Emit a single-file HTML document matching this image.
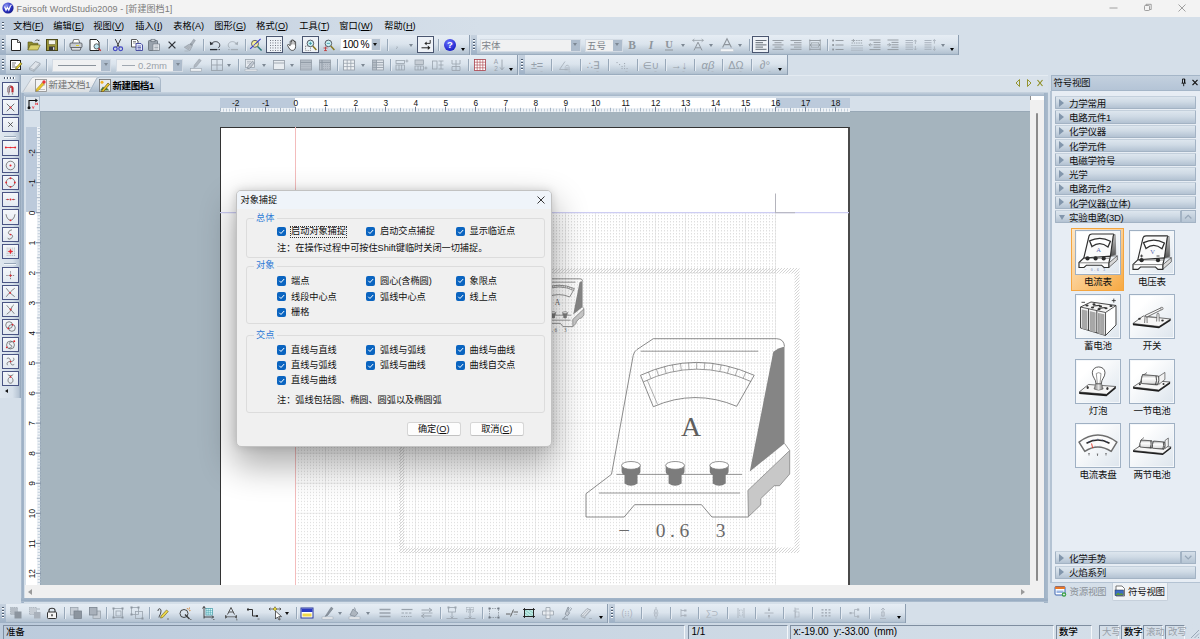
<!DOCTYPE html>
<html lang="zh"><head><meta charset="utf-8"><title>Fairsoft WordStudio2009</title>
<style>
*{box-sizing:border-box;margin:0;padding:0}
html,body{width:1200px;height:639px;overflow:hidden}
body{position:relative;background:#d5dfe9;font-family:"Liberation Sans","Noto Sans CJK SC",sans-serif;font-size:9px;color:#000;line-height:1}
.abs{position:absolute}
#title{position:absolute;left:0;top:0;width:1200px;height:17px;background:#f3f3f3}
#title .t{position:absolute;left:16.600px;top:4.600px;font-size:9px;color:#7b7b7b;white-space:nowrap;letter-spacing:0.070px}
#menu{position:absolute;left:0;top:17px;width:1200px;height:18px;background:linear-gradient(90deg,#bbcadb 0,#c2cfde 160px,#cfdae6 340px,#d5dfe9 480px)}
#menu span{position:absolute;top:4.800px;white-space:nowrap;font-size:9.200px;margin-left:-0.700px;letter-spacing:0.050px}
#menu u{text-decoration:underline;text-underline-offset:1px}
.tb{position:absolute;height:20px;background:linear-gradient(#e6edf4 0%,#dbe4ed 45%,#b4c3d2 92%,#8fa2b6 100%);border-right:1px solid #8c9db0}
.grip{position:absolute;left:2px;top:4px;width:2px;height:12px;background:repeating-linear-gradient(#4d5b6e 0 1px,#fff 1px 2px,transparent 2px 3px)}
.gz{position:absolute;left:0;top:0;width:5.500px;height:100%;background:linear-gradient(#c6d2df,#b3c2d3 50%,#9db0c5)}
.sep{position:absolute;top:4px;width:1px;height:12px;background:#98a8b9;box-shadow:1px 0 0 #e6ecf3}
.ic{position:absolute;overflow:visible}
.dd{position:absolute;width:0;height:0;border-left:2.5px solid transparent;border-right:2.5px solid transparent;border-top:3px solid #7d8894}
.ddk{position:absolute;width:0;height:0;border-left:2.5px solid transparent;border-right:2.5px solid transparent;border-top:3px solid #111}
.combo{position:absolute;top:3.600px;height:13px;background:#f0f1f2;border:1px solid #d3dbe4}
.combo .a{position:absolute;right:0;top:0;bottom:0;width:9px;background:#aebccc}
.boxed{position:absolute;top:1px;width:17px;height:17px;border:1px solid #4a5670;background:#eef2f7}
</style></head>
<body>
<div id="title">
<svg class="abs" style="left:1.700px;top:2.200px" width="12" height="12" viewBox="0 0 12 12"><defs><radialGradient id="lg" cx="35%" cy="30%" r="75%"><stop offset="0" stop-color="#8f97f0"/><stop offset="0.6" stop-color="#2b31c4"/><stop offset="1" stop-color="#151a86"/></radialGradient></defs><circle cx="6" cy="6" r="5.6" fill="url(#lg)"/><path d="M2.6 4.6 L4 8 L5.4 5.4 L6.8 8 L8.2 4.4" fill="none" stroke="#fff" stroke-width="1.2"/><path d="M8.4 3.2h1.8M8.4 3.2v2" stroke="#fff" stroke-width="0.8" fill="none"/></svg>
<div class="t">Fairsoft WordStudio2009 - [新建图档1]</div>
<svg class="abs" style="left:1105px;top:0" width="95" height="17" viewBox="0 0 95 17"><g stroke="#8a8a8a" stroke-width="0.8" fill="none"><path d="M4.5 8h8"/><rect x="39.5" y="5.5" width="5" height="5" rx="0.8"/><path d="M41 5.5v-1.2h5.2v5.2h-1.6"/><path d="M73.5 4.5l7 7M80.5 4.5l-7 7"/></g></svg>
</div>
<div id="menu"><div class="grip" style="left:2px;top:5px;height:9px"></div><span style="left:14px">文档(<u>F</u>)</span><span style="left:54px">编辑(<u>E</u>)</span><span style="left:94px">视图(<u>V</u>)</span><span style="left:136px">插入(<u>I</u>)</span><span style="left:174px">表格(A)</span><span style="left:215px">图形(<u>G</u>)</span><span style="left:257px">格式(<u>O</u>)</span><span style="left:300px">工具(<u>T</u>)</span><span style="left:340px">窗口(<u>W</u>)</span><span style="left:385px">帮助(<u>H</u>)</span></div>
<div class="tb" style="left:0px;top:35px;width:470px"><div class="gz"></div><div class="grip"></div><svg class="ic" style="left:8px;top:2px" width="16" height="16" viewBox="0 0 16 16" ><path d="M3.5 2.5h6l3 3v8h-9z" fill="#fff" stroke="#222" stroke-width="1"/><path d="M9.5 2.5v3h3" fill="#e8e8e8" stroke="#222" stroke-width="0.8"/></svg><svg class="ic" style="left:26px;top:2px" width="16" height="16" viewBox="0 0 16 16" ><path d="M2 5h4l1 1.2h5v2H4.2L2 13z" fill="#8e8a2a" stroke="#55521a" stroke-width="0.6"/><path d="M2 13l2.4-5h9.8l-2.4 5z" fill="#d8d06a" stroke="#6b671f" stroke-width="0.6"/><path d="M9 4.2c1-1.6 2.8-1.8 3.8-.6" fill="none" stroke="#444" stroke-width="0.8"/><path d="M13.4 2.4l-.2 1.8-1.6-.6z" fill="#444"/></svg><svg class="ic" style="left:44px;top:2px" width="16" height="16" viewBox="0 0 16 16" ><rect x="2.5" y="2.5" width="11" height="11" fill="#9c9738" stroke="#4a4718" stroke-width="1"/><rect x="4.5" y="3" width="7" height="4.5" fill="#f4f4ea" stroke="#5a5720" stroke-width="0.5"/><rect x="5" y="9.5" width="6" height="4" fill="#3a3a3a"/><rect x="9" y="10.2" width="1.4" height="2.6" fill="#ddd"/></svg><div class="sep" style="left:64px"></div><svg class="ic" style="left:68px;top:2px" width="16" height="16" viewBox="0 0 16 16" ><path d="M4.5 6l1.2-3.5h5l1 3.5" fill="#fff" stroke="#555" stroke-width="0.8"/><rect x="2" y="6" width="12" height="4.6" rx="1" fill="#c9cdd2" stroke="#4a4e55" stroke-width="0.8"/><path d="M3 10.6h10l-.8 2.6H3.8z" fill="#e9ebee" stroke="#4a4e55" stroke-width="0.8"/><rect x="8" y="8" width="3" height="1" fill="#e0d020"/></svg><svg class="ic" style="left:87px;top:2px" width="16" height="16" viewBox="0 0 16 16" ><path d="M3 2.5h6.5l2.5 2.5v8.5H3z" fill="#fff" stroke="#222" stroke-width="1"/><circle cx="9.6" cy="9.4" r="2.6" fill="#bfe6f2" stroke="#555" stroke-width="0.9"/><path d="M11.5 11.4l2.3 2.4" stroke="#c03030" stroke-width="1.3"/></svg><div class="sep" style="left:107px"></div><svg class="ic" style="left:110px;top:2px" width="16" height="16" viewBox="0 0 16 16" ><path d="M5.2 2l4 8M10.8 2l-4 8" stroke="#444" stroke-width="1" fill="none"/><circle cx="5.3" cy="11.8" r="1.9" fill="none" stroke="#3b3fc0" stroke-width="1.1"/><circle cx="10.7" cy="11.8" r="1.9" fill="none" stroke="#3b3fc0" stroke-width="1.1"/></svg><svg class="ic" style="left:129px;top:2px" width="16" height="16" viewBox="0 0 16 16" ><path d="M2.5 2.5h5l1.5 1.5v6h-6.5z" fill="#fff" stroke="#444" stroke-width="0.9"/><path d="M4 4.5h3M4 6h3" stroke="#666" stroke-width="0.7"/><path d="M7 6.5h5l1.5 1.5v5.5H7z" fill="#e8ecfa" stroke="#3a3f9a" stroke-width="0.9"/><path d="M8.5 9h3.5M8.5 10.5h3.5M8.5 12h3.5" stroke="#3a3f9a" stroke-width="0.7"/></svg><svg class="ic" style="left:146px;top:2px" width="16" height="16" viewBox="0 0 16 16" ><rect x="2.5" y="3.5" width="9" height="10" rx="0.8" fill="#9aa3ad" stroke="#6a737d" stroke-width="0.9"/><rect x="5" y="2.3" width="4" height="2.4" fill="#c8ced5" stroke="#6a737d" stroke-width="0.7"/><rect x="7" y="7" width="6.5" height="6.5" fill="#eef1f5" stroke="#7a838d" stroke-width="0.8"/><path d="M8.3 9h4M8.3 10.5h4M8.3 12h4" stroke="#8a939d" stroke-width="0.7"/></svg><svg class="ic" style="left:164px;top:2px" width="16" height="16" viewBox="0 0 16 16" ><path d="M4.6 4.6l6.8 6.8M11.4 4.6l-6.8 6.8" stroke="#30343a" stroke-width="1.3"/></svg><svg class="ic" style="left:182px;top:2px" width="16" height="16" viewBox="0 0 16 16" ><path d="M11.600 2.200l1.800 1.200-2.800 4.200-1.800-1.200z" fill="#a9b1ba" stroke="#8a939c" stroke-width="0.500"/><path d="M8.400 6l2.600 1.800-.800 1.400-2.800-1.800z" fill="#8d969f"/><path d="M7.200 7.200l3 2-2.400 4.600-5.600-3.600z" fill="#b9c0c8" stroke="#8a939c" stroke-width="0.500"/><path d="M3.600 10.600l3-2.600M4.800 11.400l3-2.600M6 12.200l2.800-2.400" stroke="#8a939c" stroke-width="0.500"/><path d="M2.500 14h4" stroke="#a0a8b1" stroke-width="0.600"/></svg><div class="sep" style="left:203px"></div><svg class="ic" style="left:207px;top:2px" width="16" height="16" viewBox="0 0 16 16" ><path d="M4.400 6.800c2-2.800 6.200-2.800 7.800-.400 1 1.600.600 3.400-.800 4.400" fill="none" stroke="#2a2e34" stroke-width="0.900"/><path d="M2.800 4.600l.400 3.600 3.400-1.200z" fill="#2a2e34"/><path d="M3 12.600h7" stroke="#2a2e34" stroke-width="1.300"/><path d="M10.600 12.600h2.400" stroke="#2a2e34" stroke-width="1" stroke-dasharray="0.800 0.600"/></svg><svg class="ic" style="left:225px;top:2px" width="16" height="16" viewBox="0 0 16 16" ><path d="M11.600 6.800c-2-2.800-6.200-2.800-7.800-.400-1 1.600-.600 3.400.800 4.400" fill="none" stroke="#a4adb6" stroke-width="0.900"/><path d="M13.200 4.600l-.400 3.600-3.400-1.200z" fill="#a4adb6"/><path d="M6 12.600h7" stroke="#a4adb6" stroke-width="1.300"/><path d="M3 12.600h2.400" stroke="#a4adb6" stroke-width="1" stroke-dasharray="0.800 0.600"/></svg><div class="sep" style="left:245px"></div><svg class="ic" style="left:248px;top:2px" width="16" height="16" viewBox="0 0 16 16" ><circle cx="7" cy="6.800" r="3.500" fill="#f4ee8a" stroke="#55555f" stroke-width="0.900"/><path d="M2.200 11.800L12.600 1.800" stroke="#3a3ac8" stroke-width="1.100"/><path d="M9.600 9.400l4 4.200" stroke="#2a7a7a" stroke-width="1.500"/><path d="M5 5.500l3.500 3M4.600 7.500l2.400 2" stroke="#fff" stroke-width="0.500"/></svg><div class="boxed" style="left:266px"></div><svg class="ic" style="left:266.5px;top:2px" width="16" height="16" viewBox="0 0 16 16" ><rect x="3" y="3" width="0.9" height="0.9" fill="#555b66"/><rect x="3" y="5.5" width="0.9" height="0.9" fill="#555b66"/><rect x="3" y="8" width="0.9" height="0.9" fill="#555b66"/><rect x="3" y="10.5" width="0.9" height="0.9" fill="#555b66"/><rect x="3" y="13" width="0.9" height="0.9" fill="#555b66"/><rect x="5.5" y="3" width="0.9" height="0.9" fill="#555b66"/><rect x="5.5" y="5.5" width="0.9" height="0.9" fill="#555b66"/><rect x="5.5" y="8" width="0.9" height="0.9" fill="#555b66"/><rect x="5.5" y="10.5" width="0.9" height="0.9" fill="#555b66"/><rect x="5.5" y="13" width="0.9" height="0.9" fill="#555b66"/><rect x="8" y="3" width="0.9" height="0.9" fill="#555b66"/><rect x="8" y="5.5" width="0.9" height="0.9" fill="#555b66"/><rect x="8" y="8" width="0.9" height="0.9" fill="#555b66"/><rect x="8" y="10.5" width="0.9" height="0.9" fill="#555b66"/><rect x="8" y="13" width="0.9" height="0.9" fill="#555b66"/><rect x="10.5" y="3" width="0.9" height="0.9" fill="#555b66"/><rect x="10.5" y="5.5" width="0.9" height="0.9" fill="#555b66"/><rect x="10.5" y="8" width="0.9" height="0.9" fill="#555b66"/><rect x="10.5" y="10.5" width="0.9" height="0.9" fill="#555b66"/><rect x="10.5" y="13" width="0.9" height="0.9" fill="#555b66"/><rect x="13" y="3" width="0.9" height="0.9" fill="#555b66"/><rect x="13" y="5.5" width="0.9" height="0.9" fill="#555b66"/><rect x="13" y="8" width="0.9" height="0.9" fill="#555b66"/><rect x="13" y="10.5" width="0.9" height="0.9" fill="#555b66"/><rect x="13" y="13" width="0.9" height="0.9" fill="#555b66"/></svg><svg class="ic" style="left:284.5px;top:2px" width="16" height="16" viewBox="0 0 16 16" ><path d="M5.2 8.6V4.6c0-.9 1.3-.9 1.3 0V3.4c0-.9 1.4-.9 1.4 0v.6c0-.9 1.4-.9 1.4 0v1c0-.8 1.3-.8 1.3 0v4.4c0 2.4-1.2 4-3.2 4-1.6 0-2.4-.8-3.4-2.4L2.6 8.6c-.5-.9.6-1.5 1.2-.8z" fill="#fff" stroke="#2a2a2a" stroke-width="0.8"/><path d="M6.5 4.6v3M7.9 4v3.4M9.3 5v2.6" stroke="#2a2a2a" stroke-width="0.5"/></svg><div class="boxed" style="left:302px"></div><svg class="ic" style="left:302.5px;top:2px" width="16" height="16" viewBox="0 0 16 16" ><rect x="2.5" y="9" width="5" height="4.5" fill="none" stroke="#555" stroke-width="0.6" stroke-dasharray="1 0.8"/><circle cx="7.4" cy="6.4" r="3.3" fill="#c9f0f4" stroke="#4a4a55" stroke-width="0.9"/><path d="M5.8 6.4h3.2M7.4 4.8V8" stroke="#2a8a9a" stroke-width="0.7"/><path d="M9.8 9l3.6 4" stroke="#8a7a20" stroke-width="1.5"/></svg><svg class="ic" style="left:321px;top:2px" width="16" height="16" viewBox="0 0 16 16" ><circle cx="7.4" cy="6.4" r="3.3" fill="#c9f0f4" stroke="#4a4a55" stroke-width="0.9"/><path d="M5.8 6.4h3.2" stroke="#2a8a9a" stroke-width="0.7"/><path d="M9.8 9l3.6 4" stroke="#8a7a20" stroke-width="1.5"/><path d="M2.5 11h4M4.5 9.6v4.2M3 13.6h3" stroke="#c03030" stroke-width="0.8"/></svg><div class="abs" style="left:340px;top:3.200px;width:41px;height:13.300px;background:#fff;border:1px solid #dfe5ec"><span class="abs" style="left:1.500px;top:0.800px;font-size:10.200px;letter-spacing:-0.450px">100 %</span><div class="abs" style="right:0;top:0;width:9px;height:11.300px;background:#b3c0cf;border-left:1px solid #e8edf2"></div></div><div class="ddk" style="left:373px;top:8px"></div><div class="sep" style="left:387px"></div><svg class="ic" style="left:389px;top:2px" width="16" height="16" viewBox="0 0 16 16" ><path d="M8 9.5c.6.6.2 1.8-.8 2.2" stroke="#9aa4ae" stroke-width="0.9" fill="none"/></svg><div class="dd" style="left:408.5px;top:9px"></div><div class="boxed" style="left:417.4px"></div><svg class="ic" style="left:417.9px;top:2px" width="16" height="16" viewBox="0 0 16 16" ><path d="M3.5 10.8h8" stroke="#222" stroke-width="1"/><path d="M9.8 8.6l2.6 2.2-2.6 2.2z" fill="#222"/><path d="M12.2 3v3.4H7.4" stroke="#222" stroke-width="0.9" fill="none"/><path d="M8.6 4.6L6.4 6.4l2.2 1.8z" fill="#222"/></svg><div class="sep" style="left:438px"></div><svg class="ic" style="left:441.5px;top:2px" width="16" height="16" viewBox="0 0 16 16" ><defs><radialGradient id="hg" cx="40%" cy="30%" r="70%"><stop offset="0" stop-color="#6a72ff"/><stop offset="1" stop-color="#1a1fc8"/></radialGradient></defs><circle cx="8" cy="8" r="6" fill="url(#hg)"/><text x="8" y="11.4" text-anchor="middle" font-family="Liberation Sans,sans-serif" font-weight="bold" font-size="9.5" fill="#fff">?</text></svg><div class="abs" style="left:460.5px;top:13px;width:0;height:0;border-left:2.5px solid transparent;border-right:2.5px solid transparent;border-top:3px solid #000"></div></div>
<div class="tb" style="left:471px;top:35px;width:488px"><div class="gz"></div><div class="grip"></div><div class="combo" style="left:9px;width:101px"><span class="abs" style="left:0.500px;top:1.400px;font-size:9.500px;color:#7d838a">宋体</span><div class="a"></div></div><div class="dd" style="left:102px;top:8px"></div><div class="combo" style="left:114px;width:38px"><span class="abs" style="left:1px;top:1.400px;font-size:9.500px;color:#7d838a">五号</span><div class="a"></div></div><div class="dd" style="left:144px;top:8px"></div><svg class="ic" style="left:153px;top:2px" width="16" height="16" viewBox="0 0 16 16" ><text x="8" y="12.2" text-anchor="middle" font-family="Liberation Serif,serif" font-weight="bold" font-size="11.5" fill="#8e959c">B</text></svg><svg class="ic" style="left:172px;top:2px" width="16" height="16" viewBox="0 0 16 16" ><text x="8" y="12.2" text-anchor="middle" font-family="Liberation Serif,serif" font-weight="bold" font-style="italic" font-size="11.5" fill="#8e959c">I</text></svg><svg class="ic" style="left:190px;top:2px" width="16" height="16" viewBox="0 0 16 16" ><text x="8" y="11.2" text-anchor="middle" font-family="Liberation Serif,serif" font-weight="bold" font-size="10.5" fill="#8e959c">U</text><path d="M4 13h8" stroke="#8e959c" stroke-width="1"/></svg><div class="dd" style="left:209.5px;top:9px"></div><svg class="ic" style="left:219px;top:2px" width="16" height="16" viewBox="0 0 16 16" ><path d="M4 13.4L8 5.2l4 8.2M5.4 10.8h5.2" fill="none" stroke="#8e959c" stroke-width="1"/><path d="M2.6 3.4h10.8M2.6 3.4l1.8-1.4M2.6 3.4l1.8 1.4M13.4 3.4l-1.8-1.4M13.4 3.4l-1.8 1.4" stroke="#8e959c" stroke-width="0.7" fill="none"/></svg><div class="dd" style="left:238px;top:9px"></div><svg class="ic" style="left:248px;top:2px" width="16" height="16" viewBox="0 0 16 16" ><path d="M3.6 10.6L8 1.8l4.4 8.8M5.2 7.6h5.6" fill="none" stroke="#8e959c" stroke-width="1.1"/><rect x="1.5" y="12" width="13" height="2.4" fill="#f4f6f8" stroke="#b8c0c8" stroke-width="0.4"/></svg><div class="dd" style="left:266.5px;top:9px"></div><div class="sep" style="left:278px"></div><div class="boxed" style="left:281px"></div><svg class="ic" style="left:281.5px;top:2px" width="16" height="16" viewBox="0 0 16 16" ><path d="M2.5 3.5H13.5" stroke="#555d68" stroke-width="0.9"/><path d="M2.5 5.7H10" stroke="#555d68" stroke-width="0.9"/><path d="M2.5 7.9H13.5" stroke="#555d68" stroke-width="0.9"/><path d="M2.5 10.1H10" stroke="#555d68" stroke-width="0.9"/><path d="M2.5 12.3H13.5" stroke="#555d68" stroke-width="0.9"/></svg><svg class="ic" style="left:299px;top:2px" width="16" height="16" viewBox="0 0 16 16" ><path d="M2.5 3.5H13.5" stroke="#8e959c" stroke-width="0.9"/><path d="M4.5 5.7H11.5" stroke="#8e959c" stroke-width="0.9"/><path d="M2.5 7.9H13.5" stroke="#8e959c" stroke-width="0.9"/><path d="M4.5 10.1H11.5" stroke="#8e959c" stroke-width="0.9"/><path d="M2.5 12.3H13.5" stroke="#8e959c" stroke-width="0.9"/></svg><svg class="ic" style="left:317px;top:2px" width="16" height="16" viewBox="0 0 16 16" ><path d="M2.5 3.5H13.5" stroke="#8e959c" stroke-width="0.9"/><path d="M6 5.7H13.5" stroke="#8e959c" stroke-width="0.9"/><path d="M2.5 7.9H13.5" stroke="#8e959c" stroke-width="0.9"/><path d="M6 10.1H13.5" stroke="#8e959c" stroke-width="0.9"/><path d="M2.5 12.3H13.5" stroke="#8e959c" stroke-width="0.9"/></svg><svg class="ic" style="left:335.5px;top:2px" width="16" height="16" viewBox="0 0 16 16" ><path d="M2.5 3.5H13.5" stroke="#8e959c" stroke-width="0.9"/><path d="M2.5 12.3H13.5" stroke="#8e959c" stroke-width="0.9"/><path d="M2.8 2.4v11M13.2 2.4v11M3 8h10M3 8l2-1.6M3 8l2 1.6M13 8l-2-1.6M13 8l-2 1.6" stroke="#8e959c" stroke-width="0.8" fill="none"/><path d="M4 5.8h8M4 10.2h8" stroke="#8e959c" stroke-width="0.7"/></svg><div class="sep" style="left:356px"></div><svg class="ic" style="left:359px;top:2px" width="16" height="16" viewBox="0 0 16 16" ><path d="M5.5 3.5H13.5" stroke="#8e959c" stroke-width="0.9"/><path d="M5.5 8H13.5" stroke="#8e959c" stroke-width="0.9"/><path d="M5.5 12.5H13.5" stroke="#8e959c" stroke-width="0.9"/><rect x="2.2" y="2.6" width="1.8" height="1.8" fill="#8e959c"/><rect x="2.2" y="7.1" width="1.8" height="1.8" fill="#8e959c"/><rect x="2.2" y="11.6" width="1.8" height="1.8" fill="#8e959c"/></svg><svg class="ic" style="left:377.5px;top:2px" width="16" height="16" viewBox="0 0 16 16" ><path d="M2.5 3.5h11M2.5 6h11" stroke="#8e959c" stroke-width="0.8" stroke-dasharray="1.4 0.9"/><path d="M2.5 8.5h11M2.5 11h11M2.5 13.2h11" stroke="#8e959c" stroke-width="0.8" stroke-dasharray="1 1"/><path d="M4.4 2v3" stroke="#8e959c" stroke-width="0.8"/></svg><svg class="ic" style="left:396px;top:2px" width="16" height="16" viewBox="0 0 16 16" ><path d="M2.5 3H13.5" stroke="#8e959c" stroke-width="0.9"/><path d="M6.5 5.4H13.5" stroke="#8e959c" stroke-width="0.9"/><path d="M6.5 7.8H13.5" stroke="#8e959c" stroke-width="0.9"/><path d="M6.5 10.2H13.5" stroke="#8e959c" stroke-width="0.9"/><path d="M2.5 12.6H13.5" stroke="#8e959c" stroke-width="0.9"/><path d="M2.2 7.8h3.4M3.6 6.2L2 7.8l1.6 1.6" stroke="#8e959c" stroke-width="0.8" fill="none"/></svg><svg class="ic" style="left:414px;top:2px" width="16" height="16" viewBox="0 0 16 16" ><path d="M2.5 3H13.5" stroke="#8e959c" stroke-width="0.9"/><path d="M6.5 5.4H13.5" stroke="#8e959c" stroke-width="0.9"/><path d="M6.5 7.8H13.5" stroke="#8e959c" stroke-width="0.9"/><path d="M6.5 10.2H13.5" stroke="#8e959c" stroke-width="0.9"/><path d="M2.5 12.6H13.5" stroke="#8e959c" stroke-width="0.9"/><path d="M2.2 7.8h3.4M4 6.2l1.6 1.6L4 9.4" stroke="#8e959c" stroke-width="0.8" fill="none"/></svg><svg class="ic" style="left:431.5px;top:2px" width="16" height="16" viewBox="0 0 16 16" ><path d="M2.5 3.5H10" stroke="#a4adb7" stroke-width="0.9"/><path d="M2.5 5.7H10" stroke="#a4adb7" stroke-width="0.9"/><path d="M2.5 7.9H10" stroke="#a4adb7" stroke-width="0.9"/><path d="M2.5 10.1H10" stroke="#a4adb7" stroke-width="0.9"/><path d="M2.5 12.3H10" stroke="#a4adb7" stroke-width="0.9"/><path d="M12.4 3v4M12.4 9v4M11 4.4L12.4 3l1.4 1.4M11 11.6l1.4 1.4 1.4-1.4" stroke="#a4adb7" stroke-width="0.8" fill="none"/></svg><svg class="ic" style="left:451px;top:2px" width="16" height="16" viewBox="0 0 16 16" ><path d="M2.5 3.5H9.5" stroke="#a4adb7" stroke-width="0.9"/><path d="M2.5 5.7H9.5" stroke="#a4adb7" stroke-width="0.9"/><path d="M2.5 7.9H9.5" stroke="#a4adb7" stroke-width="0.9"/><path d="M2.5 10.1H9.5" stroke="#a4adb7" stroke-width="0.9"/><path d="M2.5 12.3H9.5" stroke="#a4adb7" stroke-width="0.9"/><path d="M12.4 2.6v4M12.4 9.4v4M11 4L12.4 2.6 13.8 4M11 12l1.4 1.4 1.4-1.4" stroke="#a4adb7" stroke-width="0.8" fill="none"/></svg><div class="dd" style="left:469.5px;top:9px"></div><div class="abs" style="left:479px;top:13px;width:0;height:0;border-left:2.5px solid transparent;border-right:2.5px solid transparent;border-top:3px solid #000"></div></div>
<div class="tb" style="left:0px;top:55px;width:518px"><div class="gz"></div><div class="grip"></div><svg class="ic" style="left:8px;top:2px" width="16" height="16" viewBox="0 0 16 16" ><rect x="2.5" y="3.5" width="10" height="9" fill="#fff" stroke="#222" stroke-width="1"/><path d="M4 6h4M4 8h3M4 10h5" stroke="#444" stroke-width="0.7"/><path d="M8 10.6l4.6-5 1.4 1.2-4.6 5-2 .6z" fill="#e8d23a" stroke="#5a5210" stroke-width="0.6"/></svg><svg class="ic" style="left:27px;top:2px" width="16" height="16" viewBox="0 0 16 16" ><path d="M2.5 11l6-6.5 4.5 1.8-6 6.5z" fill="#dfe4ea" stroke="#9aa3ad" stroke-width="0.8"/><path d="M2.5 11v1.6l4.5 1.8v-1.6M7 14.4l6-6.5V6.3" fill="#c6cdd5" stroke="#9aa3ad" stroke-width="0.7"/></svg><div class="sep" style="left:46px"></div><div class="combo" style="left:52px;width:59px"><div class="abs" style="left:5px;top:5.200px;width:38px;height:1px;background:#8a939c"></div><div class="a"></div></div><div class="dd" style="left:103.5px;top:8px"></div><div class="combo" style="left:116px;width:67px"><div class="abs" style="left:5px;top:5.200px;width:13px;height:1px;background:#a0a8b1"></div><span class="abs" style="left:21px;top:1px;font-size:9.500px;color:#9aa2ab">0.2mm</span><div class="a"></div></div><div class="dd" style="left:175.5px;top:8px"></div><svg class="ic" style="left:188px;top:2px" width="16" height="16" viewBox="0 0 16 16" ><path d="M11.200 2l2 1.500-4.800 6-2.600 1.100.600-2.600z" fill="#b0b8c1" stroke="#9aa3ad" stroke-width="0.600"/><rect x="2.500" y="11.600" width="11" height="2.600" fill="#eef1f4" stroke="#9aa3ad" stroke-width="0.600"/></svg><svg class="ic" style="left:209px;top:2px" width="16" height="16" viewBox="0 0 16 16" ><rect x="2.5" y="2.5" width="11" height="11" fill="none" stroke="#9aa3ad" stroke-width="0.9"/><path d="M8 2.5v11M2.5 8h11" stroke="#9aa3ad" stroke-width="0.9"/></svg><div class="dd" style="left:227px;top:9px"></div><div class="sep" style="left:238px"></div><svg class="ic" style="left:243px;top:2px" width="16" height="16" viewBox="0 0 16 16" ><rect x="2.5" y="2.5" width="9" height="8" fill="#e6eaef" stroke="#9aa3ad" stroke-width="0.8"/><path d="M5 9.4l4.4-5.2 2 1.6-4.4 5.2-2.4.8z" fill="#c2c9d2" stroke="#7e8893" stroke-width="0.7"/><path d="M4 6h3M4 4.4h4" stroke="#9aa3ad" stroke-width="0.6"/><rect x="2" y="12.2" width="12" height="1.8" fill="#eef1f4" stroke="#9aa3ad" stroke-width="0.4"/></svg><div class="dd" style="left:262px;top:9px"></div><svg class="ic" style="left:271px;top:2px" width="16" height="16" viewBox="0 0 16 16" ><rect x="2.5" y="3.5" width="11" height="9" fill="#e9edf1" stroke="#9aa3ad" stroke-width="0.9"/><path d="M2.5 6h11" stroke="#9aa3ad" stroke-width="0.9"/></svg><div class="dd" style="left:290px;top:9px"></div><svg class="ic" style="left:297.5px;top:2px" width="16" height="16" viewBox="0 0 16 16" ><rect x="2.5" y="3" width="11" height="10" fill="#b9c1ca" stroke="#9aa3ad" stroke-width="0.9"/><path d="M2.5 5.4h11" stroke="#8a949f" stroke-width="0.9"/><path d="M3.5 7.5h9M3.5 9.5h9M3.5 11.5h9" stroke="#a2abb5" stroke-width="0.8" stroke-dasharray="1 1"/></svg><svg class="ic" style="left:317px;top:2px" width="16" height="16" viewBox="0 0 16 16" ><rect x="2.5" y="3" width="11" height="10" fill="#b9c1ca" stroke="#9aa3ad" stroke-width="0.9"/><path d="M2.5 5.4h11M5 3v10" stroke="#8a949f" stroke-width="0.9"/><path d="M6 7.5h7M6 9.5h7M6 11.5h7" stroke="#a2abb5" stroke-width="0.8" stroke-dasharray="1 1"/></svg><div class="sep" style="left:337px"></div><svg class="ic" style="left:341px;top:2px" width="16" height="16" viewBox="0 0 16 16" ><rect x="2.5" y="3" width="11" height="10" fill="#eef1f4" stroke="#9aa3ad" stroke-width="0.9"/><path d="M2.5 6.3h11M2.5 9.6h11M6.2 3v10M9.8 3v10" stroke="#9aa3ad" stroke-width="0.8"/></svg><div class="dd" style="left:361px;top:9px"></div><svg class="ic" style="left:370px;top:2px" width="16" height="16" viewBox="0 0 16 16" ><rect x="2.5" y="3" width="11" height="10" fill="#dfe4ea" stroke="#9aa3ad" stroke-width="0.9"/><path d="M2.5 5.5h11M2.5 8h11M2.5 10.5h11M6.5 3v10" stroke="#8f99a4" stroke-width="0.8"/><rect x="2.5" y="3" width="4" height="10" fill="#9aa3ad" opacity="0.6"/></svg><div class="sep" style="left:390px"></div><svg class="ic" style="left:393.5px;top:2px" width="16" height="16" viewBox="0 0 16 16" ><rect x="2" y="3.5" width="8.5" height="3" fill="none" stroke="#9aa3ad" stroke-width="0.8"/><rect x="2" y="8" width="8.5" height="5" fill="none" stroke="#9aa3ad" stroke-width="0.8"/><path d="M5 8v5M7.6 8v5M11.4 4h3M12.9 2.5v3" stroke="#9aa3ad" stroke-width="0.8"/></svg><svg class="ic" style="left:412.5px;top:2px" width="16" height="16" viewBox="0 0 16 16" ><rect x="2" y="3" width="8.5" height="4.5" fill="#c6cdd5" stroke="#9aa3ad" stroke-width="0.8"/><rect x="2" y="9" width="8.5" height="4" fill="none" stroke="#9aa3ad" stroke-width="0.8"/><path d="M5 9v4M7.6 9v4M11.4 11h3M12.9 9.5v3" stroke="#9aa3ad" stroke-width="0.8"/></svg><svg class="ic" style="left:430px;top:2px" width="16" height="16" viewBox="0 0 16 16" ><rect x="2.5" y="4" width="4.5" height="8" fill="none" stroke="#9aa3ad" stroke-width="0.8"/><path d="M8.5 4h5M8.5 8h5M8.5 12h5M11 4v8" stroke="#9aa3ad" stroke-width="0.8"/></svg><svg class="ic" style="left:448px;top:2px" width="16" height="16" viewBox="0 0 16 16" ><path d="M4 3v4M12 3v4M4 9.5v4M12 9.5v4M8 3v10.5M4 7h8M4 9.5h8M4 13.5h8" stroke="#9aa3ad" stroke-width="0.8" fill="none"/></svg><div class="sep" style="left:468px"></div><svg class="ic" style="left:472px;top:2px" width="16" height="16" viewBox="0 0 16 16" ><rect x="2.5" y="2.5" width="11" height="11" fill="#fff" stroke="#a8404a" stroke-width="0.8"/><path d="M2.5 5.2h11M2.5 8h11M2.5 10.8h11M5.2 2.5v11M8 2.5v11M10.8 2.5v11" stroke="#a8404a" stroke-width="0.6"/></svg><svg class="ic" style="left:490.5px;top:2px" width="16" height="16" viewBox="0 0 16 16" ><text x="5" y="7.4" text-anchor="middle" font-family="Liberation Sans,sans-serif" font-size="6.5" fill="#9aa3ad">A</text><text x="5" y="13.8" text-anchor="middle" font-family="Liberation Sans,sans-serif" font-size="6.5" fill="#9aa3ad">2</text><path d="M11 2.6v10M9 10.4l2 2.4 2-2.4" stroke="#9aa3ad" stroke-width="0.9" fill="none"/></svg><div class="abs" style="left:509px;top:13px;width:0;height:0;border-left:2.5px solid transparent;border-right:2.5px solid transparent;border-top:3px solid #000"></div></div>
<div class="tb" style="left:519px;top:55px;width:269px"><div class="gz"></div><div class="grip"></div><svg class="ic" style="left:10px;top:2px" width="16" height="16" viewBox="0 0 16 16" ><text x="8" y="11.6" text-anchor="middle" font-family="Liberation Sans,DejaVu Sans,sans-serif" font-size="10.8" fill="#969fa9">±=</text><path d="M11.5 14.5h2" stroke="#b0b8c2" stroke-width="0.7"/></svg><svg class="ic" style="left:38px;top:2px" width="16" height="16" viewBox="0 0 16 16" ><path d="M2.5 12.5h8M2.5 12.5L8 4.5" stroke="#a3acb6" stroke-width="0.8" fill="none"/><path d="M8.4 9.6c.8-1.8 3-1.8 3.6 0M7.6 11h5.4M7.6 12.8h5.4" stroke="#a3acb6" stroke-width="0.7" fill="none"/><path d="M11.5 14.8h2" stroke="#b0b8c2" stroke-width="0.7"/></svg><svg class="ic" style="left:66px;top:2px" width="16" height="16" viewBox="0 0 16 16" ><text x="8" y="11.6" text-anchor="middle" font-family="Liberation Sans,DejaVu Sans,sans-serif" font-size="10.3" fill="#969fa9">∴∃</text><path d="M11.5 14.5h2" stroke="#b0b8c2" stroke-width="0.7"/></svg><svg class="ic" style="left:95px;top:2px" width="16" height="16" viewBox="0 0 16 16" ><rect x="2.5" y="5" width="1.1" height="1.1" fill="#a3acb6"/><rect x="5" y="7" width="1.1" height="1.1" fill="#a3acb6"/><rect x="7.5" y="9" width="1.1" height="1.1" fill="#a3acb6"/><rect x="10" y="11" width="1.1" height="1.1" fill="#a3acb6"/><rect x="10" y="6" width="1.1" height="1.1" fill="#a3acb6"/><rect x="10" y="8.5" width="1.1" height="1.1" fill="#a3acb6"/><rect x="12.5" y="11" width="1.1" height="1.1" fill="#a3acb6"/><rect x="7.5" y="11" width="1.1" height="1.1" fill="#a3acb6"/><path d="M11.5 14.5h2" stroke="#b0b8c2" stroke-width="0.7"/></svg><svg class="ic" style="left:124px;top:2px" width="16" height="16" viewBox="0 0 16 16" ><text x="8" y="11.6" text-anchor="middle" font-family="Liberation Sans,DejaVu Sans,sans-serif" font-size="10.3" fill="#969fa9">∈∪</text><path d="M11.5 14.5h2" stroke="#b0b8c2" stroke-width="0.7"/></svg><svg class="ic" style="left:152px;top:2px" width="16" height="16" viewBox="0 0 16 16" ><text x="8" y="11.6" text-anchor="middle" font-family="Liberation Sans,DejaVu Sans,sans-serif" font-size="10.8" fill="#969fa9">→↓</text><path d="M11.5 14.5h2" stroke="#b0b8c2" stroke-width="0.7"/></svg><svg class="ic" style="left:181px;top:2px" width="16" height="16" viewBox="0 0 16 16" ><text x="8" y="11.6" text-anchor="middle" font-family="Liberation Sans,DejaVu Sans,sans-serif" font-style="italic" font-size="11.3" fill="#969fa9">αβ</text><path d="M11.5 14.5h2" stroke="#b0b8c2" stroke-width="0.7"/></svg><svg class="ic" style="left:209px;top:2px" width="16" height="16" viewBox="0 0 16 16" ><text x="8" y="11.6" text-anchor="middle" font-family="Liberation Sans,DejaVu Sans,sans-serif" font-size="10.8" fill="#969fa9">ΔΩ</text><path d="M11.5 14.5h2" stroke="#b0b8c2" stroke-width="0.7"/></svg><svg class="ic" style="left:238px;top:2px" width="16" height="16" viewBox="0 0 16 16" ><text x="8" y="11.6" text-anchor="middle" font-family="Liberation Sans,DejaVu Sans,sans-serif" font-size="11.8" fill="#969fa9">∂°</text><path d="M11.5 14.5h2" stroke="#b0b8c2" stroke-width="0.7"/></svg><div class="sep" style="left:32px"></div><div class="sep" style="left:61px"></div><div class="sep" style="left:89px"></div><div class="sep" style="left:118px"></div><div class="sep" style="left:146px"></div><div class="sep" style="left:175px"></div><div class="sep" style="left:203px"></div><div class="sep" style="left:232px"></div><div class="abs" style="left:259px;top:13px;width:0;height:0;border-left:2.5px solid transparent;border-right:2.5px solid transparent;border-top:3px solid #000"></div></div>
<div class="abs" style="left:0;top:75px;width:21px;height:323px;background:linear-gradient(90deg,#dfe7ef 0,#d6e0ea 60%,#b7c5d4 90%,#8fa2b6 100%)"><div class="abs" style="left:4px;top:2px;width:12px;height:2px;background:repeating-linear-gradient(90deg,#4d5b6e 0 1px,#fff 1px 2px,transparent 2px 3px)"></div><div class="abs" style="left:1.5px;top:7px;width:17px;height:15.400px;border:1px solid #4a5584;background:linear-gradient(#f4f7fa,#e4eaf1)"><svg class="abs" style="left:0px;top:-0.800px" width="15" height="15" viewBox="0 0 16 16"><path d="M5.200 10.800V6.600C5.200 3.200 11 3.200 11 6.600V10.800H9.300V6.800C9.300 5.400 6.900 5.400 6.900 6.800V10.800z" fill="#dc2a32" stroke="#7a1418" stroke-width="0.400"/><path d="M5.200 10.800V6.600C5.200 4.800 6.600 4 8.100 4V5.700C7.400 5.700 6.900 6.100 6.900 6.800V10.800z" fill="#b4b7bd" stroke="#5a5d63" stroke-width="0.400"/><path d="M5.300 12.900h1.500M9.400 12.900h1.500M6.050 11.900v1M10.150 11.900v1" stroke="#555" stroke-width="0.600"/></svg></div><div class="abs" style="left:1.5px;top:24.3px;width:17px;height:15.400px;border:1px solid #4a5584;background:linear-gradient(#f4f7fa,#e4eaf1)"><svg class="abs" style="left:0px;top:-0.800px" width="15" height="15" viewBox="0 0 16 16"><path d="M4 4l8 8M12 4l-8 8" stroke="#444" stroke-width="0.8"/><circle cx="8" cy="8" r="1" fill="#e8242c"/></svg></div><div class="abs" style="left:1.5px;top:41.6px;width:17px;height:15.400px;border:1px solid #4a5584;background:linear-gradient(#f4f7fa,#e4eaf1)"><svg class="abs" style="left:0px;top:-0.800px" width="15" height="15" viewBox="0 0 16 16"><path d="M5.600 5.600l4.800 4.800M10.400 5.600l-4.800 4.800" stroke="#444" stroke-width="0.9"/></svg></div><div class="abs" style="left:4px;top:61px;width:12px;height:1px;background:#97a7b9;box-shadow:0 1px 0 #f2f6fa"></div><div class="abs" style="left:1.5px;top:65.2px;width:17px;height:15.400px;border:1px solid #4a5584;background:linear-gradient(#f4f7fa,#e4eaf1)"><svg class="abs" style="left:0px;top:-0.800px" width="15" height="15" viewBox="0 0 16 16"><path d="M3 8h10" stroke="#e8242c" stroke-width="0.9"/><circle cx="3" cy="8" r="1" fill="#e8242c"/><circle cx="13" cy="8" r="1" fill="#e8242c"/><circle cx="8" cy="8" r="0.9" fill="#e8242c"/></svg></div><div class="abs" style="left:1.5px;top:82.5px;width:17px;height:15.400px;border:1px solid #4a5584;background:linear-gradient(#f4f7fa,#e4eaf1)"><svg class="abs" style="left:0px;top:-0.800px" width="15" height="15" viewBox="0 0 16 16"><circle cx="8" cy="8" r="4.600" fill="none" stroke="#4a4a4a" stroke-width="0.700"/><circle cx="8" cy="8" r="1.100" fill="#e8242c"/></svg></div><div class="abs" style="left:1.5px;top:99.8px;width:17px;height:15.400px;border:1px solid #4a5584;background:linear-gradient(#f4f7fa,#e4eaf1)"><svg class="abs" style="left:0px;top:-0.800px" width="15" height="15" viewBox="0 0 16 16"><circle cx="8" cy="8" r="4.600" fill="none" stroke="#4a4a4a" stroke-width="0.700"/><circle cx="3.400" cy="8" r="1" fill="#e8242c"/><circle cx="12.600" cy="8" r="1" fill="#e8242c"/><circle cx="8" cy="3.400" r="1" fill="#e8242c"/><circle cx="8" cy="12.600" r="1" fill="#e8242c"/></svg></div><div class="abs" style="left:1.5px;top:117.1px;width:17px;height:15.400px;border:1px solid #4a5584;background:linear-gradient(#f4f7fa,#e4eaf1)"><svg class="abs" style="left:0px;top:-0.800px" width="15" height="15" viewBox="0 0 16 16"><path d="M3 8h3.500M9.500 8H13" stroke="#777" stroke-width="0.9"/><circle cx="8" cy="8" r="1" fill="#e8242c"/><circle cx="5" cy="8" r="0.700" fill="#e8242c"/><circle cx="11" cy="8" r="0.700" fill="#e8242c"/></svg></div><div class="abs" style="left:1.5px;top:134.4px;width:17px;height:15.400px;border:1px solid #4a5584;background:linear-gradient(#f4f7fa,#e4eaf1)"><svg class="abs" style="left:0px;top:-0.800px" width="15" height="15" viewBox="0 0 16 16"><path d="M3.200 4.500C4.500 13 11.500 13 12.800 4.500" fill="none" stroke="#4a4a4a" stroke-width="0.700"/><circle cx="8" cy="11" r="1" fill="#e8242c"/></svg></div><div class="abs" style="left:1.5px;top:151.7px;width:17px;height:15.400px;border:1px solid #4a5584;background:linear-gradient(#f4f7fa,#e4eaf1)"><svg class="abs" style="left:0px;top:-0.800px" width="15" height="15" viewBox="0 0 16 16"><path d="M9.500 3C4.500 4 5 8 8 8s3.500 4-1.500 5" fill="none" stroke="#4a4a4a" stroke-width="0.700"/><circle cx="8" cy="8" r="0.900" fill="#e8242c"/><path d="M5 12l1.500 1" stroke="#333" stroke-width="0.7"/></svg></div><div class="abs" style="left:1.5px;top:169px;width:17px;height:15.400px;border:1px solid #4a5584;background:linear-gradient(#f4f7fa,#e4eaf1)"><svg class="abs" style="left:0px;top:-0.800px" width="15" height="15" viewBox="0 0 16 16"><rect x="4" y="4" width="0.8" height="0.8" fill="#888"/><rect x="4" y="6" width="0.8" height="0.8" fill="#888"/><rect x="4" y="8" width="0.8" height="0.8" fill="#888"/><rect x="4" y="10" width="0.8" height="0.8" fill="#888"/><rect x="4" y="12" width="0.8" height="0.8" fill="#888"/><rect x="6" y="4" width="0.8" height="0.8" fill="#888"/><rect x="6" y="6" width="0.8" height="0.8" fill="#888"/><rect x="6" y="8" width="0.8" height="0.8" fill="#888"/><rect x="6" y="10" width="0.8" height="0.8" fill="#888"/><rect x="6" y="12" width="0.8" height="0.8" fill="#888"/><rect x="8" y="4" width="0.8" height="0.8" fill="#888"/><rect x="8" y="6" width="0.8" height="0.8" fill="#888"/><rect x="8" y="8" width="0.8" height="0.8" fill="#888"/><rect x="8" y="10" width="0.8" height="0.8" fill="#888"/><rect x="8" y="12" width="0.8" height="0.8" fill="#888"/><rect x="10" y="4" width="0.8" height="0.8" fill="#888"/><rect x="10" y="6" width="0.8" height="0.8" fill="#888"/><rect x="10" y="8" width="0.8" height="0.8" fill="#888"/><rect x="10" y="10" width="0.8" height="0.8" fill="#888"/><rect x="10" y="12" width="0.8" height="0.8" fill="#888"/><rect x="12" y="4" width="0.8" height="0.8" fill="#888"/><rect x="12" y="6" width="0.8" height="0.8" fill="#888"/><rect x="12" y="8" width="0.8" height="0.8" fill="#888"/><rect x="12" y="10" width="0.8" height="0.8" fill="#888"/><rect x="12" y="12" width="0.8" height="0.8" fill="#888"/><path d="M5.500 8h5M8 5.500v5" stroke="#e8242c" stroke-width="0.9"/><rect x="6.800" y="6.800" width="2.400" height="2.400" fill="#e8242c"/></svg></div><div class="abs" style="left:4px;top:187.500px;width:12px;height:1px;background:#97a7b9;box-shadow:0 1px 0 #f2f6fa"></div><div class="abs" style="left:1.5px;top:192.3px;width:17px;height:15.400px;border:1px solid #4a5584;background:linear-gradient(#f4f7fa,#e4eaf1)"><svg class="abs" style="left:0px;top:-0.800px" width="15" height="15" viewBox="0 0 16 16"><path d="M3.500 8h9M8 3.500v9" stroke="#555" stroke-width="0.7" stroke-dasharray="1.500 0.800"/><circle cx="8" cy="8" r="1.100" fill="#e8242c"/></svg></div><div class="abs" style="left:1.5px;top:209.6px;width:17px;height:15.400px;border:1px solid #4a5584;background:linear-gradient(#f4f7fa,#e4eaf1)"><svg class="abs" style="left:0px;top:-0.800px" width="15" height="15" viewBox="0 0 16 16"><path d="M3.500 3.500c3 4 5 6 9 9M12.500 3.500c-3 2-6 5-9 9" stroke="#4a4a4a" stroke-width="0.700" fill="none"/><circle cx="7.600" cy="8.400" r="1" fill="#e8242c"/></svg></div><div class="abs" style="left:1.5px;top:226.9px;width:17px;height:15.400px;border:1px solid #4a5584;background:linear-gradient(#f4f7fa,#e4eaf1)"><svg class="abs" style="left:0px;top:-0.800px" width="15" height="15" viewBox="0 0 16 16"><path d="M4 3.500c2 3 6 6 8 9M11.500 3c-4 3-1 6-7.500 10" stroke="#4a4a4a" stroke-width="0.700" fill="none"/><circle cx="8" cy="8" r="1" fill="#e8242c"/></svg></div><div class="abs" style="left:1.5px;top:244.2px;width:17px;height:15.400px;border:1px solid #4a5584;background:linear-gradient(#f4f7fa,#e4eaf1)"><svg class="abs" style="left:0px;top:-0.800px" width="15" height="15" viewBox="0 0 16 16"><circle cx="6.500" cy="6.500" r="3.600" fill="none" stroke="#4a4a4a" stroke-width="0.700"/><circle cx="9.500" cy="9.500" r="3.600" fill="none" stroke="#4a4a4a" stroke-width="0.700"/><circle cx="5.600" cy="10" r="0.900" fill="#e8242c"/><circle cx="10.200" cy="5.900" r="0.900" fill="#e8242c"/></svg></div><div class="abs" style="left:1.5px;top:261.5px;width:17px;height:15.400px;border:1px solid #4a5584;background:linear-gradient(#f4f7fa,#e4eaf1)"><svg class="abs" style="left:0px;top:-0.800px" width="15" height="15" viewBox="0 0 16 16"><circle cx="8" cy="8.500" r="4.200" fill="none" stroke="#4a4a4a" stroke-width="0.700"/><path d="M10 5c-4 0-4 3-2 3.500s2 3.500-2 3.500" fill="none" stroke="#4a4a4a" stroke-width="0.700"/><circle cx="4" cy="11" r="0.900" fill="#e8242c"/><circle cx="12" cy="4.500" r="0.900" fill="#e8242c"/><path d="M11 4.500h2M12 3.500v2" stroke="#e8242c" stroke-width="0.600"/></svg></div><div class="abs" style="left:1.5px;top:278.8px;width:17px;height:15.400px;border:1px solid #4a5584;background:linear-gradient(#f4f7fa,#e4eaf1)"><svg class="abs" style="left:0px;top:-0.800px" width="15" height="15" viewBox="0 0 16 16"><path d="M4 5c3-2 4 1 4 3s1 5 4 3M5 12c-2-3 1-4 3-4s5-1 3-4" fill="none" stroke="#4a4a4a" stroke-width="0.700"/><circle cx="8" cy="8" r="0.900" fill="#e8242c"/></svg></div><div class="abs" style="left:1.5px;top:296.1px;width:17px;height:15.400px;border:1px solid #4a5584;background:linear-gradient(#f4f7fa,#e4eaf1)"><svg class="abs" style="left:0px;top:-0.800px" width="15" height="15" viewBox="0 0 16 16"><path d="M5 3.500c1 2 5 2 6 0M8 6c-4 2-3 7 0 7s4-5 0-7" fill="none" stroke="#4a4a4a" stroke-width="0.700"/><circle cx="8" cy="6.200" r="0.900" fill="#e8242c"/></svg></div><div class="abs" style="left:5px;top:313.500px;width:0;height:0;border-top:2.500px solid transparent;border-bottom:2.500px solid transparent;border-right:3px solid #111"></div></div>
<div class="abs" style="left:21px;top:75px;width:1027px;height:18px;background:#d8e1ea;border-top:1px solid #e4ebf2"></div><svg class="abs" style="left:21px;top:75px" width="150" height="19" viewBox="0 0 150 19">
<defs><linearGradient id="t1" x1="0" y1="0" x2="0" y2="1"><stop offset="0" stop-color="#f7f7f7"/><stop offset="1" stop-color="#d9dde1"/></linearGradient>
<linearGradient id="t2" x1="0" y1="0" x2="0" y2="1"><stop offset="0" stop-color="#dde5ed"/><stop offset="0.5" stop-color="#c3d0dd"/><stop offset="1" stop-color="#a3b5c7"/></linearGradient></defs>
<path d="M1.5 17.5 L10.500 3.500 Q11.500 2 13.500 2 H76.500 L68.500 17.500 Z" fill="url(#t1)" stroke="#b4bcc5" stroke-width="0.8"/>
<path d="M67.500 18.500 L75.500 4 Q76.500 2 79 2 H136.500 Q139.500 2 139.500 5 V18.500 Z" fill="url(#t2)" stroke="#9fb0c2" stroke-width="0.8"/>
</svg><svg class="abs" style="left:35px;top:78.500px" width="12" height="13" viewBox="0 0 12 13"><rect x="0.500" y="0.500" width="11" height="12" fill="#f4f4f4" stroke="#8a8a8a" stroke-width="0.8"/><path d="M6 4h4M6 6h4M2 10.500h8" stroke="#aaa" stroke-width="0.700"/><path d="M1.500 10l6-6.500 1.800 1.600-6 6.500-2.300.600z" fill="#e9c62a" stroke="#9a7a10" stroke-width="0.500"/><circle cx="9" cy="3" r="1.700" fill="#e8343a"/></svg><div class="abs" style="left:48.500px;top:80px;font-size:9.500px;color:#737373;white-space:nowrap;letter-spacing:-0.300px">新建文档1</div><svg class="abs" style="left:99px;top:79px" width="12" height="13" viewBox="0 0 12 13"><rect x="0.500" y="0.500" width="11" height="12" fill="#e8ecef" stroke="#6a6a6a" stroke-width="0.8"/><circle cx="3" cy="3.200" r="1.500" fill="#f0b020"/><path d="M1 11.500l3-4 2 2.500 1.500-1.500 3 3z" fill="#4a7a4a"/><path d="M3 11l6-7 1.600 1.400-6 7-2.200.600z" fill="#e9c62a" stroke="#4a3a08" stroke-width="0.600"/></svg><div class="abs" style="left:112.500px;top:80.500px;font-size:9.500px;font-weight:bold;color:#000;white-space:nowrap;letter-spacing:-0.400px">新建图档1</div><svg class="abs" style="left:1012px;top:77px" width="34" height="12" viewBox="0 0 34 12"><g fill="none" stroke="#8c8c1c" stroke-width="0.900"><path d="M7.500 2.500v7l-3.500-3.500z"/><path d="M15.500 2.500v7l3.500-3.500z"/><path d="M25.500 3l5 6M30.500 3l-5 6" stroke-width="1.100"/></g></svg>
<div class="abs" style="left:21px;top:92px;width:1027px;height:3.500px;background:linear-gradient(#c8d4e0,#a3b5c8)"></div><div class="abs" style="left:21px;top:93px;width:3.200px;height:510px;background:linear-gradient(90deg,#b4c3d3,#9db0c5 40%,#a3b5c8)"></div><div class="abs" style="left:1044px;top:93px;width:4px;height:510px;background:linear-gradient(90deg,#9fb2c6,#a9bacb)"></div><div class="abs" style="left:21px;top:598px;width:1027px;height:4px;background:linear-gradient(#a3b5c8,#98acc2 70%,#b5c4d3)"></div><div class="abs" style="left:24.500px;top:95.500px;width:1006px;height:16px;background:#d6e0ea"></div><div class="abs" style="left:24.500px;top:95.500px;width:16px;height:490px;background:#d6e0ea"></div><div class="abs" style="left:40px;top:111px;width:989.500px;height:473.800px;background:#a5b4be;border-top:1px solid #98a8b6;border-left:1px solid #98a8b6"></div><div class="abs" style="left:24.900px;top:96.100px;width:14.800px;height:14.500px;border:1px solid #a9b9ca;background:#dde6ee"></div><svg class="abs" style="left:26px;top:97px" width="13" height="13" viewBox="0 0 13 13"><path d="M3 10.500V3.500h7" fill="none" stroke="#111" stroke-width="1.100"/><path d="M9.300 1.500l2.700 2-2.700 2z" fill="#111"/><circle cx="3" cy="10.800" r="1.500" fill="#111"/><path d="M6.300 9.300l.900 2.200 .900-2.200M9.700 5.800v2.200M11.500 5.800v2.200M9.700 6.900h1.800" stroke="#e8242c" stroke-width="0.700" fill="none"/></svg><div class="abs" style="left:220px;top:127px;width:629.500px;height:458px;background:#fff;border-top:1px solid #333;border-left:1px solid #333;border-right:2px solid #4a4a4a"></div><div class="abs" style="left:220px;top:98px;width:629.500px;height:10px;background:#bccadb"></div><div class="abs" style="left:295px;top:98px;width:480.500px;height:10px;background:#fff"></div><div class="abs" style="left:220px;top:108px;width:629.500px;height:3.500px;background:#eef2f6"></div><svg class="abs" style="left:220px;top:97px" width="630" height="15" viewBox="0 0 630 15"><path d="M3.5 11.700V14.500M6.5 11.700V14.500M9.5 11.700V14.500M12.5 11.700V14.500M18.5 11.700V14.500M21.5 11.700V14.500M24.5 11.700V14.500M27.5 11.700V14.500M33.5 11.700V14.500M36.5 11.700V14.500M39.5 11.700V14.500M42.5 11.700V14.500M48.5 11.700V14.500M51.5 11.700V14.500M54.5 11.700V14.500M57.5 11.700V14.500M63.5 11.700V14.500M66.5 11.700V14.500M69.5 11.700V14.500M72.5 11.700V14.500M78.5 11.700V14.500M81.5 11.700V14.500M84.5 11.700V14.500M87.5 11.700V14.500M93.5 11.700V14.500M96.5 11.700V14.500M99.5 11.700V14.500M102.5 11.700V14.500M108.5 11.700V14.500M111.5 11.700V14.500M114.5 11.700V14.500M117.5 11.700V14.500M123.5 11.700V14.500M126.5 11.700V14.500M129.5 11.700V14.500M132.5 11.700V14.500M138.5 11.700V14.500M141.5 11.700V14.500M144.5 11.700V14.500M147.5 11.700V14.500M153.5 11.700V14.500M156.5 11.700V14.500M159.5 11.700V14.500M162.5 11.700V14.500M168.5 11.700V14.500M171.5 11.700V14.500M174.5 11.700V14.500M177.5 11.700V14.500M183.5 11.700V14.500M186.5 11.700V14.500M189.5 11.700V14.500M192.5 11.700V14.500M198.5 11.700V14.500M201.5 11.700V14.500M204.5 11.700V14.500M207.5 11.700V14.500M213.5 11.700V14.500M216.5 11.700V14.500M219.5 11.700V14.500M222.5 11.700V14.500M228.5 11.700V14.500M231.5 11.700V14.500M234.5 11.700V14.500M237.5 11.700V14.500M243.5 11.700V14.500M246.5 11.700V14.500M249.5 11.700V14.500M252.5 11.700V14.500M258.5 11.700V14.500M261.5 11.700V14.500M264.5 11.700V14.500M267.5 11.700V14.500M273.5 11.700V14.500M276.5 11.700V14.500M279.5 11.700V14.500M282.5 11.700V14.500M288.5 11.700V14.500M291.5 11.700V14.500M294.5 11.700V14.500M297.5 11.700V14.500M303.5 11.700V14.500M306.5 11.700V14.500M309.5 11.700V14.500M312.5 11.700V14.500M318.5 11.700V14.500M321.5 11.700V14.500M324.5 11.700V14.500M327.5 11.700V14.500M333.5 11.700V14.500M336.5 11.700V14.500M339.5 11.700V14.500M342.5 11.700V14.500M348.5 11.700V14.500M351.5 11.700V14.500M354.5 11.700V14.500M357.5 11.700V14.500M363.5 11.700V14.500M366.5 11.700V14.500M369.5 11.700V14.500M372.5 11.700V14.500M378.5 11.700V14.500M381.5 11.700V14.500M384.5 11.700V14.500M387.5 11.700V14.500M393.5 11.700V14.500M396.5 11.700V14.500M399.5 11.700V14.500M402.5 11.700V14.500M408.5 11.700V14.500M411.5 11.700V14.500M414.5 11.700V14.500M417.5 11.700V14.500M423.5 11.700V14.500M426.5 11.700V14.500M429.5 11.700V14.500M432.5 11.700V14.500M438.5 11.700V14.500M441.5 11.700V14.500M444.5 11.700V14.500M447.5 11.700V14.500M453.5 11.700V14.500M456.5 11.700V14.500M459.5 11.700V14.500M462.5 11.700V14.500M468.5 11.700V14.500M471.5 11.700V14.500M474.5 11.700V14.500M477.5 11.700V14.500M483.5 11.700V14.500M486.5 11.700V14.500M489.5 11.700V14.500M492.5 11.700V14.500M498.5 11.700V14.500M501.5 11.700V14.500M504.5 11.700V14.500M507.5 11.700V14.500M513.5 11.700V14.500M516.5 11.700V14.500M519.5 11.700V14.500M522.5 11.700V14.500M528.5 11.700V14.500M531.5 11.700V14.500M534.5 11.700V14.500M537.5 11.700V14.500M543.5 11.700V14.500M546.5 11.700V14.500M549.5 11.700V14.500M552.5 11.700V14.500M558.5 11.700V14.500M561.5 11.700V14.500M564.5 11.700V14.500M567.5 11.700V14.500M573.5 11.700V14.500M576.5 11.700V14.500M579.5 11.700V14.500M582.5 11.700V14.500M588.5 11.700V14.500M591.5 11.700V14.500M594.5 11.700V14.500M597.5 11.700V14.500M603.5 11.700V14.500M606.5 11.700V14.500M609.5 11.700V14.500M612.5 11.700V14.500M618.5 11.700V14.500M621.5 11.700V14.500M624.5 11.700V14.500M627.5 11.700V14.500" stroke="#bfccd9" stroke-width="1"/><path d="M0.5 10.800V14.500M30.5 10.800V14.500M60.5 10.800V14.500M90.5 10.800V14.500M120.5 10.800V14.500M150.5 10.800V14.500M180.5 10.800V14.500M210.5 10.800V14.500M240.5 10.800V14.500M270.5 10.800V14.500M300.5 10.800V14.500M330.5 10.800V14.500M360.5 10.800V14.500M390.5 10.800V14.500M420.5 10.800V14.500M450.5 10.800V14.500M480.5 10.800V14.500M510.5 10.800V14.500M540.5 10.800V14.500M570.5 10.800V14.500M600.5 10.800V14.500" stroke="#a5b4c4" stroke-width="1"/><path d="M15.5 9.800V14.500M45.5 9.800V14.500M75.5 9.800V14.500M105.5 9.800V14.500M135.5 9.800V14.500M165.5 9.800V14.500M195.5 9.800V14.500M225.5 9.800V14.500M255.5 9.800V14.500M285.5 9.800V14.500M315.5 9.800V14.500M345.5 9.800V14.500M375.5 9.800V14.500M405.5 9.800V14.500M435.5 9.800V14.500M465.5 9.800V14.500M495.5 9.800V14.500M525.5 9.800V14.500M555.5 9.800V14.500M585.5 9.800V14.500M615.5 9.800V14.500" stroke="#75839a" stroke-width="1"/><text x="15.7" y="8.800" text-anchor="middle" font-family="Liberation Sans,sans-serif" font-size="8.300" fill="#111">-2</text><text x="45.7" y="8.800" text-anchor="middle" font-family="Liberation Sans,sans-serif" font-size="8.300" fill="#111">-1</text><text x="75.7" y="8.800" text-anchor="middle" font-family="Liberation Sans,sans-serif" font-size="8.300" fill="#111">0</text><text x="105.7" y="8.800" text-anchor="middle" font-family="Liberation Sans,sans-serif" font-size="8.300" fill="#111">1</text><text x="135.7" y="8.800" text-anchor="middle" font-family="Liberation Sans,sans-serif" font-size="8.300" fill="#111">2</text><text x="165.7" y="8.800" text-anchor="middle" font-family="Liberation Sans,sans-serif" font-size="8.300" fill="#111">3</text><text x="195.7" y="8.800" text-anchor="middle" font-family="Liberation Sans,sans-serif" font-size="8.300" fill="#111">4</text><text x="225.7" y="8.800" text-anchor="middle" font-family="Liberation Sans,sans-serif" font-size="8.300" fill="#111">5</text><text x="255.7" y="8.800" text-anchor="middle" font-family="Liberation Sans,sans-serif" font-size="8.300" fill="#111">6</text><text x="285.7" y="8.800" text-anchor="middle" font-family="Liberation Sans,sans-serif" font-size="8.300" fill="#111">7</text><text x="315.7" y="8.800" text-anchor="middle" font-family="Liberation Sans,sans-serif" font-size="8.300" fill="#111">8</text><text x="345.7" y="8.800" text-anchor="middle" font-family="Liberation Sans,sans-serif" font-size="8.300" fill="#111">9</text><text x="375.7" y="8.800" text-anchor="middle" font-family="Liberation Sans,sans-serif" font-size="8.300" fill="#111">10</text><text x="405.7" y="8.800" text-anchor="middle" font-family="Liberation Sans,sans-serif" font-size="8.300" fill="#111">11</text><text x="435.7" y="8.800" text-anchor="middle" font-family="Liberation Sans,sans-serif" font-size="8.300" fill="#111">12</text><text x="465.7" y="8.800" text-anchor="middle" font-family="Liberation Sans,sans-serif" font-size="8.300" fill="#111">13</text><text x="495.7" y="8.800" text-anchor="middle" font-family="Liberation Sans,sans-serif" font-size="8.300" fill="#111">14</text><text x="525.7" y="8.800" text-anchor="middle" font-family="Liberation Sans,sans-serif" font-size="8.300" fill="#111">15</text><text x="555.7" y="8.800" text-anchor="middle" font-family="Liberation Sans,sans-serif" font-size="8.300" fill="#111">16</text><text x="585.7" y="8.800" text-anchor="middle" font-family="Liberation Sans,sans-serif" font-size="8.300" fill="#111">17</text><text x="615.7" y="8.800" text-anchor="middle" font-family="Liberation Sans,sans-serif" font-size="8.300" fill="#111">18</text></svg><div class="abs" style="left:26px;top:127px;width:11.200px;height:458px;background:#bccadb"></div><div class="abs" style="left:26px;top:212.200px;width:11.200px;height:373px;background:#fff"></div><div class="abs" style="left:37.200px;top:127px;width:3.300px;height:458px;background:#eef2f6"></div><svg class="abs" style="left:26px;top:127px" width="15" height="458" viewBox="0 0 15 458"><path d="M11.700 1.53H14.500M11.700 4.54H14.500M11.700 7.54H14.500M11.700 13.56H14.500M11.700 16.56H14.500M11.700 19.57H14.500M11.700 22.57H14.500M11.700 28.59H14.500M11.700 31.59H14.500M11.700 34.60H14.500M11.700 37.60H14.500M11.700 43.62H14.500M11.700 46.62H14.500M11.700 49.63H14.500M11.700 52.63H14.500M11.700 58.65H14.500M11.700 61.65H14.500M11.700 64.66H14.500M11.700 67.66H14.500M11.700 73.68H14.500M11.700 76.68H14.500M11.700 79.69H14.500M11.700 82.69H14.500M11.700 88.71H14.500M11.700 91.71H14.500M11.700 94.72H14.500M11.700 97.72H14.500M11.700 103.74H14.500M11.700 106.74H14.500M11.700 109.75H14.500M11.700 112.75H14.500M11.700 118.77H14.500M11.700 121.77H14.500M11.700 124.78H14.500M11.700 127.78H14.500M11.700 133.80H14.500M11.700 136.80H14.500M11.700 139.81H14.500M11.700 142.81H14.500M11.700 148.83H14.500M11.700 151.83H14.500M11.700 154.84H14.500M11.700 157.84H14.500M11.700 163.86H14.500M11.700 166.86H14.500M11.700 169.87H14.500M11.700 172.87H14.500M11.700 178.89H14.500M11.700 181.89H14.500M11.700 184.90H14.500M11.700 187.90H14.500M11.700 193.92H14.500M11.700 196.92H14.500M11.700 199.93H14.500M11.700 202.93H14.500M11.700 208.95H14.500M11.700 211.95H14.500M11.700 214.96H14.500M11.700 217.96H14.500M11.700 223.98H14.500M11.700 226.98H14.500M11.700 229.99H14.500M11.700 232.99H14.500M11.700 239.01H14.500M11.700 242.01H14.500M11.700 245.02H14.500M11.700 248.02H14.500M11.700 254.04H14.500M11.700 257.04H14.500M11.700 260.05H14.500M11.700 263.05H14.500M11.700 269.07H14.500M11.700 272.07H14.500M11.700 275.08H14.500M11.700 278.08H14.500M11.700 284.10H14.500M11.700 287.10H14.500M11.700 290.11H14.500M11.700 293.11H14.500M11.700 299.13H14.500M11.700 302.13H14.500M11.700 305.14H14.500M11.700 308.14H14.500M11.700 314.16H14.500M11.700 317.16H14.500M11.700 320.17H14.500M11.700 323.17H14.500M11.700 329.19H14.500M11.700 332.19H14.500M11.700 335.20H14.500M11.700 338.20H14.500M11.700 344.22H14.500M11.700 347.22H14.500M11.700 350.23H14.500M11.700 353.23H14.500M11.700 359.25H14.500M11.700 362.25H14.500M11.700 365.26H14.500M11.700 368.26H14.500M11.700 374.28H14.500M11.700 377.28H14.500M11.700 380.29H14.500M11.700 383.29H14.500M11.700 389.31H14.500M11.700 392.31H14.500M11.700 395.32H14.500M11.700 398.32H14.500M11.700 404.34H14.500M11.700 407.34H14.500M11.700 410.35H14.500M11.700 413.35H14.500M11.700 419.37H14.500M11.700 422.37H14.500M11.700 425.38H14.500M11.700 428.38H14.500M11.700 434.40H14.500M11.700 437.40H14.500M11.700 440.41H14.500M11.700 443.41H14.500M11.700 449.43H14.500M11.700 452.43H14.500M11.700 455.44H14.500" stroke="#bfccd9" stroke-width="1"/><path d="M10.800 10.55H14.500M10.800 40.61H14.500M10.800 70.67H14.500M10.800 100.73H14.500M10.800 130.79H14.500M10.800 160.85H14.500M10.800 190.91H14.500M10.800 220.97H14.500M10.800 251.03H14.500M10.800 281.09H14.500M10.800 311.15H14.500M10.800 341.21H14.500M10.800 371.27H14.500M10.800 401.33H14.500M10.800 431.39H14.500" stroke="#a5b4c4" stroke-width="1"/><path d="M9.800 25.58H14.500M9.800 55.64H14.500M9.800 85.70H14.500M9.800 115.76H14.500M9.800 145.82H14.500M9.800 175.88H14.500M9.800 205.94H14.500M9.800 236.00H14.500M9.800 266.06H14.500M9.800 296.12H14.500M9.800 326.18H14.500M9.800 356.24H14.500M9.800 386.30H14.500M9.800 416.36H14.500M9.800 446.42H14.500" stroke="#75839a" stroke-width="1"/><text transform="translate(8.800 25.88) rotate(-90)" text-anchor="middle" font-family="Liberation Sans,sans-serif" font-size="8.300" fill="#111">-2</text><text transform="translate(8.800 55.94) rotate(-90)" text-anchor="middle" font-family="Liberation Sans,sans-serif" font-size="8.300" fill="#111">-1</text><text transform="translate(8.800 86.00) rotate(-90)" text-anchor="middle" font-family="Liberation Sans,sans-serif" font-size="8.300" fill="#111">0</text><text transform="translate(8.800 116.06) rotate(-90)" text-anchor="middle" font-family="Liberation Sans,sans-serif" font-size="8.300" fill="#111">1</text><text transform="translate(8.800 146.12) rotate(-90)" text-anchor="middle" font-family="Liberation Sans,sans-serif" font-size="8.300" fill="#111">2</text><text transform="translate(8.800 176.18) rotate(-90)" text-anchor="middle" font-family="Liberation Sans,sans-serif" font-size="8.300" fill="#111">3</text><text transform="translate(8.800 206.24) rotate(-90)" text-anchor="middle" font-family="Liberation Sans,sans-serif" font-size="8.300" fill="#111">4</text><text transform="translate(8.800 236.30) rotate(-90)" text-anchor="middle" font-family="Liberation Sans,sans-serif" font-size="8.300" fill="#111">5</text><text transform="translate(8.800 266.36) rotate(-90)" text-anchor="middle" font-family="Liberation Sans,sans-serif" font-size="8.300" fill="#111">6</text><text transform="translate(8.800 296.42) rotate(-90)" text-anchor="middle" font-family="Liberation Sans,sans-serif" font-size="8.300" fill="#111">7</text><text transform="translate(8.800 326.48) rotate(-90)" text-anchor="middle" font-family="Liberation Sans,sans-serif" font-size="8.300" fill="#111">8</text><text transform="translate(8.800 356.54) rotate(-90)" text-anchor="middle" font-family="Liberation Sans,sans-serif" font-size="8.300" fill="#111">9</text><text transform="translate(8.800 386.60) rotate(-90)" text-anchor="middle" font-family="Liberation Sans,sans-serif" font-size="8.300" fill="#111">10</text><text transform="translate(8.800 416.66) rotate(-90)" text-anchor="middle" font-family="Liberation Sans,sans-serif" font-size="8.300" fill="#111">11</text><text transform="translate(8.800 446.72) rotate(-90)" text-anchor="middle" font-family="Liberation Sans,sans-serif" font-size="8.300" fill="#111">12</text></svg><div class="abs" style="left:1029.500px;top:95.500px;width:14.700px;height:490px;background:#f0f0f0"></div><div class="abs" style="left:1030px;top:95.500px;width:14px;height:4.500px;background:#fff;border-left:1.500px solid #909090"></div><div class="abs" style="left:1035.800px;top:112.500px;width:2.200px;height:468px;background:#8b8b8b;border-radius:1px"></div><div class="abs" style="left:24.500px;top:585px;width:1019.500px;height:13px;background:#f0f0f0"></div><div class="abs" style="left:27.500px;top:588.500px;width:0;height:0;border-top:3px solid transparent;border-bottom:3px solid transparent;border-right:4.500px solid #9a9a9a"></div><div class="abs" style="left:1020.500px;top:588.500px;width:0;height:0;border-top:3px solid transparent;border-bottom:3px solid transparent;border-left:4.500px solid #9a9a9a"></div>
<svg class="abs" style="left:220px;top:127px" width="630" height="458" viewBox="220 127 630 458"><defs>
<pattern id="dots" x="295" y="212.200" width="3" height="3.006" patternUnits="userSpaceOnUse"><rect x="0" y="0" width="1" height="1.100" fill="#d9d9d9"/></pattern>
<pattern id="cm" x="295" y="212.200" width="30" height="30.060" patternUnits="userSpaceOnUse"><path d="M0.500 0V30.060M0 0.500H30" stroke="#ececec" stroke-width="1"/></pattern>
<pattern id="hatch" x="0" y="0" width="3" height="3" patternUnits="userSpaceOnUse"><path d="M-0.500 3.500L3.500 -0.500M-0.500 0.500L0.500 -0.500M2.500 3.500L3.500 2.500" stroke="#cacaca" stroke-width="0.800"/></pattern>
</defs><rect x="295" y="212" width="481" height="373" fill="url(#cm)"/><rect x="295" y="212" width="481" height="373" fill="url(#dots)"/><path d="M295.500 127V585" stroke="#f3bcbc" stroke-width="1"/><path d="M220 212.600H849" stroke="#cdcdf3" stroke-width="1.200"/><path d="M775.500 193.500V213M775.500 212.700H795" stroke="#b4b4bc" stroke-width="1" fill="none"/><path fill-rule="evenodd" d="M399 268H799.500V553H399zM404.500 273.500V547.500H794.500V273.500z" fill="url(#hatch)"/><g><path d="M773.300 351.700 Q778 347.800 784.500 346.500 V443.400 L749.800 471.600 Z" fill="#858585"/><path d="M747.900 490.400 L789.700 450.500 V474 L779.600 485.700 H774.200 L760.800 498.600 V504.900 L748.400 516.700 Z" fill="#c8c8c8" stroke="#7a7a7a" stroke-width="0.700"/><path d="M784.500 443.400 L789.700 450.500" fill="none" stroke="#7a7a7a" stroke-width="0.700"/><path d="M611.500 474.300 L633.200 355.500 Q634 351.500 637 349.500 L653.300 338.700 H776.700 Q784 339 784.500 346.500" fill="none" stroke="#6e6e6e" stroke-width="0.800"/><path d="M611.500 474.300 L586 493.700 V517 H624.200 L634.600 504.700 H701.500 L711.900 517 H748.400" fill="none" stroke="#6e6e6e" stroke-width="0.800"/><path d="M640.800 351.200H758.300M616.400 474.400H742M598.900 493H740.100" stroke="#7a7a7a" stroke-width="0.800"/><path d="M640.500 375.300 Q696 349.500 754.200 375.300 L736.700 406.300 Q695 388.600 653.300 406.700 Z" fill="none" stroke="#6e6e6e" stroke-width="0.800"/><path d="M643.500 381.800 Q696 356.700 751 381.500" fill="none" stroke="#6e6e6e" stroke-width="0.700"/><path d="M648.4 371.9L651.0 378.5" stroke="#7a7a7a" stroke-width="0.600"/><path d="M656.4 369.0L658.6 375.6" stroke="#7a7a7a" stroke-width="0.600"/><path d="M664.4 366.6L666.1 373.3" stroke="#7a7a7a" stroke-width="0.600"/><path d="M672.4 364.8L673.7 371.5" stroke="#7a7a7a" stroke-width="0.600"/><path d="M680.5 363.5L681.3 370.2" stroke="#7a7a7a" stroke-width="0.600"/><path d="M688.6 362.7L689.0 369.5" stroke="#7a7a7a" stroke-width="0.600"/><path d="M696.7 362.4L696.6 369.2" stroke="#7a7a7a" stroke-width="0.600"/><path d="M704.8 362.7L704.3 369.4" stroke="#7a7a7a" stroke-width="0.600"/><path d="M713.0 363.5L712.0 370.2" stroke="#7a7a7a" stroke-width="0.600"/><path d="M721.2 364.8L719.8 371.4" stroke="#7a7a7a" stroke-width="0.600"/><path d="M729.4 366.6L727.5 373.2" stroke="#7a7a7a" stroke-width="0.600"/><path d="M737.6 369.0L735.3 375.4" stroke="#7a7a7a" stroke-width="0.600"/><path d="M745.9 371.9L743.2 378.2" stroke="#7a7a7a" stroke-width="0.600"/><path d="M647.200 380 L657.500 404.300" stroke="#7a7a7a" stroke-width="0.600"/><text x="691" y="436.300" text-anchor="middle" font-family="Liberation Serif,serif" font-size="27.800" fill="#5f5f5f">A</text><path d="M621.6 465.400 V471 Q621.6 474 624.5 475 V483.500 Q631 488 637.5 483.500 V475 Q640.4 474 640.4 471 V465.400 Z" fill="#7c7c7c"/><ellipse cx="631" cy="465.400" rx="9.400" ry="3.900" fill="#fff" stroke="#7a7a7a" stroke-width="0.800"/><path d="M665.7 465.400 V471 Q665.7 474 668.6 475 V483.500 Q675.1 488 681.6 483.500 V475 Q684.5 474 684.5 471 V465.400 Z" fill="#7c7c7c"/><ellipse cx="675.1" cy="465.400" rx="9.400" ry="3.900" fill="#fff" stroke="#7a7a7a" stroke-width="0.800"/><path d="M709.8 465.400 V471 Q709.8 474 712.7 475 V483.500 Q719.2 488 725.7 483.500 V475 Q728.6 474 728.6 471 V465.400 Z" fill="#7c7c7c"/><ellipse cx="719.2" cy="465.400" rx="9.400" ry="3.900" fill="#fff" stroke="#7a7a7a" stroke-width="0.800"/><text x="618.300" y="537.200" textLength="11.700" lengthAdjust="spacingAndGlyphs" font-family="Liberation Serif,serif" font-size="19" fill="#6a6a6a">−</text><text x="655.700" y="537.200" font-family="Liberation Serif,serif" font-size="19.500" letter-spacing="4.600" fill="#6a6a6a">0.6</text><text x="720.500" y="537.200" text-anchor="middle" font-family="Liberation Serif,serif" font-size="19.500" fill="#6a6a6a">3</text></g><g transform="translate(372.29 188.06) scale(0.268)" stroke-width="2"><path d="M773.300 351.700 Q778 347.800 784.500 346.500 V443.400 L749.800 471.600 Z" fill="#858585"/><path d="M747.900 490.400 L789.700 450.500 V474 L779.600 485.700 H774.200 L760.800 498.600 V504.900 L748.400 516.700 Z" fill="#c8c8c8" stroke="#7a7a7a" stroke-width="2.500"/><path d="M784.500 443.400 L789.700 450.500" fill="none" stroke="#7a7a7a" stroke-width="2.500"/><path d="M611.500 474.300 L633.200 355.500 Q634 351.500 637 349.500 L653.300 338.700 H776.700 Q784 339 784.500 346.500" fill="none" stroke="#6e6e6e" stroke-width="2.800"/><path d="M611.500 474.300 L586 493.700 V517 H624.200 L634.600 504.700 H701.500 L711.900 517 H748.400" fill="none" stroke="#6e6e6e" stroke-width="2.800"/><path d="M640.800 351.200H758.300M616.400 474.400H742M598.900 493H740.100" stroke="#7a7a7a" stroke-width="2.800"/><path d="M640.500 375.300 Q696 349.500 754.200 375.300 L736.700 406.300 Q695 388.600 653.300 406.700 Z" fill="none" stroke="#6e6e6e" stroke-width="2.800"/><path d="M643.500 381.800 Q696 356.700 751 381.500" fill="none" stroke="#6e6e6e" stroke-width="2.500"/><path d="M648.4 371.9L651.0 378.5" stroke="#7a7a7a" stroke-width="2.200"/><path d="M656.4 369.0L658.6 375.6" stroke="#7a7a7a" stroke-width="2.200"/><path d="M664.4 366.6L666.1 373.3" stroke="#7a7a7a" stroke-width="2.200"/><path d="M672.4 364.8L673.7 371.5" stroke="#7a7a7a" stroke-width="2.200"/><path d="M680.5 363.5L681.3 370.2" stroke="#7a7a7a" stroke-width="2.200"/><path d="M688.6 362.7L689.0 369.5" stroke="#7a7a7a" stroke-width="2.200"/><path d="M696.7 362.4L696.6 369.2" stroke="#7a7a7a" stroke-width="2.200"/><path d="M704.8 362.7L704.3 369.4" stroke="#7a7a7a" stroke-width="2.200"/><path d="M713.0 363.5L712.0 370.2" stroke="#7a7a7a" stroke-width="2.200"/><path d="M721.2 364.8L719.8 371.4" stroke="#7a7a7a" stroke-width="2.200"/><path d="M729.4 366.6L727.5 373.2" stroke="#7a7a7a" stroke-width="2.200"/><path d="M737.6 369.0L735.3 375.4" stroke="#7a7a7a" stroke-width="2.200"/><path d="M745.9 371.9L743.2 378.2" stroke="#7a7a7a" stroke-width="2.200"/><path d="M647.200 380 L657.500 404.300" stroke="#7a7a7a" stroke-width="2.200"/><text x="691" y="436.300" text-anchor="middle" font-family="Liberation Serif,serif" font-size="27.800" fill="#5f5f5f">A</text><path d="M621.6 465.400 V471 Q621.6 474 624.5 475 V483.500 Q631 488 637.5 483.500 V475 Q640.4 474 640.4 471 V465.400 Z" fill="#7c7c7c"/><ellipse cx="631" cy="465.400" rx="9.400" ry="3.900" fill="#fff" stroke="#7a7a7a" stroke-width="2.800"/><path d="M665.7 465.400 V471 Q665.7 474 668.6 475 V483.500 Q675.1 488 681.6 483.500 V475 Q684.5 474 684.5 471 V465.400 Z" fill="#7c7c7c"/><ellipse cx="675.1" cy="465.400" rx="9.400" ry="3.900" fill="#fff" stroke="#7a7a7a" stroke-width="2.800"/><path d="M709.8 465.400 V471 Q709.8 474 712.7 475 V483.500 Q719.2 488 725.7 483.500 V475 Q728.6 474 728.6 471 V465.400 Z" fill="#7c7c7c"/><ellipse cx="719.2" cy="465.400" rx="9.400" ry="3.900" fill="#fff" stroke="#7a7a7a" stroke-width="2.800"/><text x="618.300" y="537.200" textLength="11.700" lengthAdjust="spacingAndGlyphs" font-family="Liberation Serif,serif" font-size="19" fill="#6a6a6a">−</text><text x="655.700" y="537.200" font-family="Liberation Serif,serif" font-size="19.500" letter-spacing="4.600" fill="#6a6a6a">0.6</text><text x="720.500" y="537.200" text-anchor="middle" font-family="Liberation Serif,serif" font-size="19.500" fill="#6a6a6a">3</text></g></svg>
<div class="abs" style="left:1049px;top:75px;width:151px;height:527px;background:#d5dfe9"></div><div class="abs" style="left:1051px;top:75px;width:149px;height:16px;background:linear-gradient(#c3d0de,#b4c4d6);border:1px solid #a5b6c8;border-right:none"></div><div class="abs" style="left:1053.500px;top:77.500px;font-size:9.500px;color:#111;white-space:nowrap;letter-spacing:-0.300px">符号视图</div><svg class="abs" style="left:1178px;top:77px" width="22" height="11" viewBox="0 0 22 11"><path d="M4.500 2v4M6.800 2v4M4.500 2h2.300M3.500 6.200h4.400M5.700 6.200v3" stroke="#111" stroke-width="0.900" fill="none"/><rect x="6" y="2" width="1" height="4" fill="#111"/><path d="M14.500 2.800l5 5.400M19.500 2.800l-5 5.400" stroke="#111" stroke-width="1.200"/></svg><div class="abs" style="left:1050.300px;top:91px;width:149.700px;height:491.500px;background:#e7edf4;border-left:2px solid #b4c3d3;border-bottom:1px solid #b4c3d3"></div><div class="abs" style="left:1055px;top:96px;width:140.5px;height:13.400px;background:linear-gradient(#dde6ee 0%,#cfdae5 45%,#b3c2d2 100%);border:1px solid #a3b3c4;border-top-color:#c4d0dc;border-radius:1px"></div><div class="abs" style="left:1058.800px;top:98.5px;width:0;height:0;border-top:4.300px solid transparent;border-bottom:4.300px solid transparent;border-left:5.300px solid #8296ac"></div><div class="abs" style="left:1069px;top:98.9px;font-size:9.500px;color:#111;white-space:nowrap;letter-spacing:-0.250px">力学常用</div><div class="abs" style="left:1055px;top:110.25px;width:140.5px;height:13.400px;background:linear-gradient(#dde6ee 0%,#cfdae5 45%,#b3c2d2 100%);border:1px solid #a3b3c4;border-top-color:#c4d0dc;border-radius:1px"></div><div class="abs" style="left:1058.800px;top:112.75px;width:0;height:0;border-top:4.300px solid transparent;border-bottom:4.300px solid transparent;border-left:5.300px solid #8296ac"></div><div class="abs" style="left:1069px;top:113.15px;font-size:9.500px;color:#111;white-space:nowrap;letter-spacing:-0.250px">电路元件1</div><div class="abs" style="left:1055px;top:124.5px;width:140.5px;height:13.400px;background:linear-gradient(#dde6ee 0%,#cfdae5 45%,#b3c2d2 100%);border:1px solid #a3b3c4;border-top-color:#c4d0dc;border-radius:1px"></div><div class="abs" style="left:1058.800px;top:127px;width:0;height:0;border-top:4.300px solid transparent;border-bottom:4.300px solid transparent;border-left:5.300px solid #8296ac"></div><div class="abs" style="left:1069px;top:127.4px;font-size:9.500px;color:#111;white-space:nowrap;letter-spacing:-0.250px">化学仪器</div><div class="abs" style="left:1055px;top:138.75px;width:140.5px;height:13.400px;background:linear-gradient(#dde6ee 0%,#cfdae5 45%,#b3c2d2 100%);border:1px solid #a3b3c4;border-top-color:#c4d0dc;border-radius:1px"></div><div class="abs" style="left:1058.800px;top:141.25px;width:0;height:0;border-top:4.300px solid transparent;border-bottom:4.300px solid transparent;border-left:5.300px solid #8296ac"></div><div class="abs" style="left:1069px;top:141.65px;font-size:9.500px;color:#111;white-space:nowrap;letter-spacing:-0.250px">化学元件</div><div class="abs" style="left:1055px;top:153px;width:140.5px;height:13.400px;background:linear-gradient(#dde6ee 0%,#cfdae5 45%,#b3c2d2 100%);border:1px solid #a3b3c4;border-top-color:#c4d0dc;border-radius:1px"></div><div class="abs" style="left:1058.800px;top:155.5px;width:0;height:0;border-top:4.300px solid transparent;border-bottom:4.300px solid transparent;border-left:5.300px solid #8296ac"></div><div class="abs" style="left:1069px;top:155.9px;font-size:9.500px;color:#111;white-space:nowrap;letter-spacing:-0.250px">电磁学符号</div><div class="abs" style="left:1055px;top:167.25px;width:140.5px;height:13.400px;background:linear-gradient(#dde6ee 0%,#cfdae5 45%,#b3c2d2 100%);border:1px solid #a3b3c4;border-top-color:#c4d0dc;border-radius:1px"></div><div class="abs" style="left:1058.800px;top:169.75px;width:0;height:0;border-top:4.300px solid transparent;border-bottom:4.300px solid transparent;border-left:5.300px solid #8296ac"></div><div class="abs" style="left:1069px;top:170.15px;font-size:9.500px;color:#111;white-space:nowrap;letter-spacing:-0.250px">光学</div><div class="abs" style="left:1055px;top:181.5px;width:140.5px;height:13.400px;background:linear-gradient(#dde6ee 0%,#cfdae5 45%,#b3c2d2 100%);border:1px solid #a3b3c4;border-top-color:#c4d0dc;border-radius:1px"></div><div class="abs" style="left:1058.800px;top:184px;width:0;height:0;border-top:4.300px solid transparent;border-bottom:4.300px solid transparent;border-left:5.300px solid #8296ac"></div><div class="abs" style="left:1069px;top:184.4px;font-size:9.500px;color:#111;white-space:nowrap;letter-spacing:-0.250px">电路元件2</div><div class="abs" style="left:1055px;top:195.75px;width:140.5px;height:13.400px;background:linear-gradient(#dde6ee 0%,#cfdae5 45%,#b3c2d2 100%);border:1px solid #a3b3c4;border-top-color:#c4d0dc;border-radius:1px"></div><div class="abs" style="left:1058.800px;top:198.25px;width:0;height:0;border-top:4.300px solid transparent;border-bottom:4.300px solid transparent;border-left:5.300px solid #8296ac"></div><div class="abs" style="left:1069px;top:198.65px;font-size:9.500px;color:#111;white-space:nowrap;letter-spacing:-0.250px">化学仪器(立体)</div><div class="abs" style="left:1055px;top:210px;width:126px;height:13.400px;background:linear-gradient(#dde6ee 0%,#cfdae5 45%,#b3c2d2 100%);border:1px solid #a3b3c4;border-top-color:#c4d0dc;border-radius:1px"></div><div class="abs" style="left:1058.500px;top:214.5px;width:0;height:0;border-left:3.800px solid transparent;border-right:3.800px solid transparent;border-top:5.300px solid #8296ac"></div><div class="abs" style="left:1069px;top:212.9px;font-size:9.500px;color:#111;white-space:nowrap;letter-spacing:-0.250px">实验电路(3D)</div><div class="abs" style="left:1181px;top:210px;width:14.500px;height:13.400px;background:linear-gradient(#d5dfe9,#b5c4d3);border:1px solid #a3b3c4"></div><svg class="abs" style="left:1181px;top:210px" width="14.500" height="13.400" viewBox="0 0 14.500 13.400"><path d="M4 8.500l3.200-3.200 3.200 3.200" fill="none" stroke="#97a7b8" stroke-width="1.200"/></svg><div class="abs" style="left:1055px;top:551px;width:126px;height:13.400px;background:linear-gradient(#dde6ee 0%,#cfdae5 45%,#b3c2d2 100%);border:1px solid #a3b3c4;border-top-color:#c4d0dc;border-radius:1px"></div><div class="abs" style="left:1058.800px;top:553.5px;width:0;height:0;border-top:4.300px solid transparent;border-bottom:4.300px solid transparent;border-left:5.300px solid #8296ac"></div><div class="abs" style="left:1069px;top:553.9px;font-size:9.500px;color:#111;white-space:nowrap;letter-spacing:-0.250px">化学手势</div><div class="abs" style="left:1181px;top:551px;width:14.500px;height:13.400px;background:linear-gradient(#d5dfe9,#b5c4d3);border:1px solid #a3b3c4"></div><svg class="abs" style="left:1181px;top:551px" width="14.500" height="13.400" viewBox="0 0 14.500 13.400"><path d="M4 4.800l3.200 3.200 3.200-3.200" fill="none" stroke="#97a7b8" stroke-width="1.200"/></svg><div class="abs" style="left:1055px;top:565.5px;width:140.5px;height:13.400px;background:linear-gradient(#dde6ee 0%,#cfdae5 45%,#b3c2d2 100%);border:1px solid #a3b3c4;border-top-color:#c4d0dc;border-radius:1px"></div><div class="abs" style="left:1058.800px;top:568px;width:0;height:0;border-top:4.300px solid transparent;border-bottom:4.300px solid transparent;border-left:5.300px solid #8296ac"></div><div class="abs" style="left:1069px;top:568.4px;font-size:9.500px;color:#111;white-space:nowrap;letter-spacing:-0.250px">火焰系列</div><div class="abs" style="left:1071px;top:227.500px;width:53px;height:63px;background:linear-gradient(135deg,#fde6c4 0%,#fbd198 45%,#f7a942 100%);border:1px solid #f4a540"></div><div class="abs" style="left:1075px;top:230px;width:46px;height:45px;background:linear-gradient(135deg,#ffffff 25%,#dde5ed 100%);border:1px solid #9fb0c3;box-shadow:inset 0 0 0 1px #f4f7fa"></div><div class="abs" style="left:1065px;top:276.9px;width:66px;text-align:center;font-size:9.500px;color:#111;white-space:nowrap;letter-spacing:-0.250px">电流表</div><svg class="abs" style="left:1075.2px;top:230.1px" width="46" height="45" viewBox="0 0 46 45"><defs><linearGradient id="sg" x1="0" y1="0" x2="0" y2="1"><stop offset="0" stop-color="#c8c8c8"/><stop offset="1" stop-color="#555"/></linearGradient></defs><g transform="translate(0 0)"><path d="M38.200 6 Q39.200 4.300 40.200 4.600 L40.800 24.600 L35.400 26.200 Z" fill="url(#sg)" stroke="#555" stroke-width="0.500"/><path d="M33.800 33 L42.300 25.800 V30 L33.800 37.500 Z" fill="#d9d9d9" stroke="#444" stroke-width="0.700"/><path d="M35.400 26.200 L42.300 25.800" stroke="#444" stroke-width="0.600"/><path d="M8.800 28 L14 6 Q14.600 4 17 4 H38 Q39.500 4 38.200 6 L35.400 26.200" fill="#fafafa" stroke="#2e2e2e" stroke-width="1.150"/><path d="M8.800 28 L4 32.600 V37.500 H9 L11.500 35.200 H26.500 L29 37.500 H33.800 V33 L35.400 26.200 Z" fill="#fdfdfd" stroke="#2e2e2e" stroke-width="1.150"/><path d="M5 32.800 H33.800 M9 28.200 H34.800" stroke="#555" stroke-width="0.700"/><path d="M14.600 10.900 Q25 5.600 35.400 11.200 L33 17 Q25 10.400 17 16.600 Z" fill="#fff" stroke="#2e2e2e" stroke-width="1.300"/><text x="23.700" y="22.300" text-anchor="middle" font-family="Liberation Serif,serif" font-size="6.500" fill="#5a6ab0">A</text><circle cx="12.5" cy="28.400" r="2.100" fill="#2a2a2a"/><circle cx="20.6" cy="28.400" r="2.100" fill="#2a2a2a"/><circle cx="28.7" cy="28.400" r="2.100" fill="#2a2a2a"/></g><text x="20.500" y="41" text-anchor="middle" font-family="Liberation Serif,serif" font-size="3.600" letter-spacing="1.800" fill="#5a6a9a">− 0.6 3</text></svg><div class="abs" style="left:1129px;top:230px;width:46px;height:45px;background:linear-gradient(135deg,#ffffff 25%,#dde5ed 100%);border:1px solid #9fb0c3;box-shadow:inset 0 0 0 1px #f4f7fa"></div><div class="abs" style="left:1119px;top:276.9px;width:66px;text-align:center;font-size:9.500px;color:#111;white-space:nowrap;letter-spacing:-0.250px">电压表</div><svg class="abs" style="left:1129.2px;top:230.1px" width="46" height="45" viewBox="0 0 46 45"><g transform="translate(0 1.8)"><path d="M38.200 6 Q39.200 4.300 40.200 4.600 L40.800 24.600 L35.400 26.200 Z" fill="url(#sg)" stroke="#555" stroke-width="0.500"/><path d="M33.800 33 L42.300 25.800 V30 L33.800 37.500 Z" fill="#d9d9d9" stroke="#444" stroke-width="0.700"/><path d="M35.400 26.200 L42.300 25.800" stroke="#444" stroke-width="0.600"/><path d="M8.800 28 L14 6 Q14.600 4 17 4 H38 Q39.500 4 38.200 6 L35.400 26.200" fill="#fafafa" stroke="#2e2e2e" stroke-width="1.150"/><path d="M8.800 28 L4 32.600 V37.500 H9 L11.500 35.200 H26.500 L29 37.500 H33.800 V33 L35.400 26.200 Z" fill="#fdfdfd" stroke="#2e2e2e" stroke-width="1.150"/><path d="M5 32.800 H33.800 M9 28.200 H34.800" stroke="#555" stroke-width="0.700"/><path d="M14.600 10.900 Q25 5.600 35.400 11.200 L33 17 Q25 10.400 17 16.600 Z" fill="#fff" stroke="#2e2e2e" stroke-width="1.300"/><text x="23.700" y="22.300" text-anchor="middle" font-family="Liberation Serif,serif" font-size="6.500" fill="#5a6ab0">V</text><circle cx="12.6" cy="28.400" r="2.100" fill="#2a2a2a"/><circle cx="29" cy="28.400" r="2.100" fill="#2a2a2a"/><path d="M11.1 24.200h3M12.6 22.700v3M27.5 24.200h3" stroke="#222" stroke-width="0.800"/></g></svg><div class="abs" style="left:1075px;top:294.3px;width:46px;height:45px;background:linear-gradient(135deg,#ffffff 25%,#dde5ed 100%);border:1px solid #9fb0c3;box-shadow:inset 0 0 0 1px #f4f7fa"></div><div class="abs" style="left:1065px;top:341.2px;width:66px;text-align:center;font-size:9.500px;color:#111;white-space:nowrap;letter-spacing:-0.250px">蓄电池</div><svg class="abs" style="left:1075.2px;top:294.4px" width="46" height="45" viewBox="0 0 46 45"><path d="M5.500 13 L16 8 L41 11.500 L41 31 L30.500 41.500 L5.500 34 Z" fill="#f4f4f4" stroke="#333" stroke-width="0.900"/><path d="M5.500 13 L30.500 18.500 L41 11.500 M30.500 18.500 V41.500" fill="none" stroke="#333" stroke-width="0.800"/><path d="M31.500 19.500 L40 13.500 V30.500 L31.500 39.500 Z" fill="#fff"/><path d="M13.500 14.800 V36.500 M21.800 16.600 V39" stroke="#333" stroke-width="0.900"/><path d="M6.8 15.5 L12.3 16.7 V36.0 L6.8 34.5 Z" fill="#9a9a9a"/><path d="M7.9 15.8 V34.8" stroke="#c8c8c8" stroke-width="0.400"/><path d="M9.0 16.1 V35.1" stroke="#c8c8c8" stroke-width="0.400"/><path d="M10.1 16.4 V35.4" stroke="#c8c8c8" stroke-width="0.400"/><path d="M11.2 16.7 V35.7" stroke="#c8c8c8" stroke-width="0.400"/><path d="M14.8 17.3 L20.5 18.5 V38.5 L14.8 37 Z" fill="#9a9a9a"/><path d="M15.9 17.6 V37.3" stroke="#c8c8c8" stroke-width="0.400"/><path d="M17.1 17.9 V37.6" stroke="#c8c8c8" stroke-width="0.400"/><path d="M18.2 18.2 V37.9" stroke="#c8c8c8" stroke-width="0.400"/><path d="M19.4 18.5 V38.2" stroke="#c8c8c8" stroke-width="0.400"/><path d="M23 19 L29.3 20.2 V41.0 L23 39.5 Z" fill="#9a9a9a"/><path d="M24.3 19.3 V39.8" stroke="#c8c8c8" stroke-width="0.400"/><path d="M25.5 19.6 V40.1" stroke="#c8c8c8" stroke-width="0.400"/><path d="M26.8 19.9 V40.4" stroke="#c8c8c8" stroke-width="0.400"/><path d="M28.0 20.2 V40.7" stroke="#c8c8c8" stroke-width="0.400"/><ellipse cx="12" cy="11.5" rx="1.600" ry="1" fill="#333"/><ellipse cx="19" cy="10.2" rx="1.600" ry="1" fill="#333"/><ellipse cx="17.5" cy="13.5" rx="1.600" ry="1" fill="#333"/><ellipse cx="25.5" cy="12.3" rx="1.600" ry="1" fill="#333"/><ellipse cx="24" cy="15.2" rx="1.600" ry="1" fill="#333"/><ellipse cx="31" cy="14.3" rx="1.600" ry="1" fill="#333"/><ellipse cx="36" cy="12" rx="1.600" ry="1" fill="#333"/><path d="M18 12 L25 11.300 M23.500 14.300 L30.500 13.500" stroke="#333" stroke-width="1.200"/><path d="M6.500 8.300h3.500M36.800 6.600h4M38.800 4.600v4" stroke="#222" stroke-width="0.800"/></svg><div class="abs" style="left:1129px;top:294.3px;width:46px;height:45px;background:linear-gradient(135deg,#ffffff 25%,#dde5ed 100%);border:1px solid #9fb0c3;box-shadow:inset 0 0 0 1px #f4f7fa"></div><div class="abs" style="left:1119px;top:341.2px;width:66px;text-align:center;font-size:9.500px;color:#111;white-space:nowrap;letter-spacing:-0.250px">开关</div><svg class="abs" style="left:1129.2px;top:294.4px" width="46" height="45" viewBox="0 0 46 45"><path d="M3.9 29.5 L14.2 22 L41.6 25 L30 32.5 Z" fill="#f6f6f6" stroke="#333" stroke-width="0.700"/><path d="M3.9 29.5 L30 32.5 L41.6 25 V26.8 L30 34.3 L3.9 31.3 Z" fill="#1e1e1e"/><ellipse cx="10.500" cy="24.800" rx="1.300" ry="1" fill="#333"/><ellipse cx="33.500" cy="26.600" rx="1.300" ry="1" fill="#333"/><path d="M15.500 29 L16 22.500 Q17 21 18 22.500 L18.200 29" fill="#e8e8e8" stroke="#444" stroke-width="0.600"/><path d="M27.500 27.500 L28 19.800 Q29 18 30 19.800 L30.300 27.500" fill="#e8e8e8" stroke="#444" stroke-width="0.600"/><path d="M16.300 21.300 L32.500 13.600 Q34.200 13.400 33.600 15.200 L17.600 23.200 Z" fill="#fafafa" stroke="#333" stroke-width="0.700"/><circle cx="32.800" cy="14.500" r="1.300" fill="#ddd" stroke="#555" stroke-width="0.500"/><path d="M17 23 L27.500 23.800" stroke="#666" stroke-width="0.500"/></svg><div class="abs" style="left:1075px;top:358.6px;width:46px;height:45px;background:linear-gradient(135deg,#ffffff 25%,#dde5ed 100%);border:1px solid #9fb0c3;box-shadow:inset 0 0 0 1px #f4f7fa"></div><div class="abs" style="left:1065px;top:405.5px;width:66px;text-align:center;font-size:9.500px;color:#111;white-space:nowrap;letter-spacing:-0.250px">灯泡</div><svg class="abs" style="left:1075.2px;top:358.7px" width="46" height="45" viewBox="0 0 46 45"><path d="M4.2 33 L13.5 25.5 L40.8 27.5 L31.5 35.3 Z" fill="#f6f6f6" stroke="#333" stroke-width="0.700"/><path d="M4.2 33 L31.5 35.3 L40.8 27.5 V29.5 L31.5 37.3 L4.2 35 Z" fill="#1e1e1e"/><ellipse cx="12.700" cy="28.400" rx="1.100" ry="1.500" fill="#333"/><ellipse cx="32.400" cy="29.600" rx="1.100" ry="1.500" fill="#333"/><defs><linearGradient id="bg1" x1="0" y1="0" x2="1" y2="0"><stop offset="0" stop-color="#777"/><stop offset="0.500" stop-color="#e4e4e4"/><stop offset="1" stop-color="#666"/></linearGradient></defs><path d="M20.700 24.500 L19 30 Q23.600 32.500 28.200 30 L26.500 24.500 Z" fill="url(#bg1)" stroke="#555" stroke-width="0.500"/><path d="M21 24.800 C21 20 17.300 18.500 17.300 13.800 C17.300 6 30 6 30 13.800 C30 18.500 26.300 20 26.300 24.800 Z" fill="#fff" stroke="#333" stroke-width="0.800"/><path d="M22.300 24.500 L21.300 14.500 Q23.600 12.800 26 14.500 L25 24.500" fill="none" stroke="#555" stroke-width="0.600"/></svg><div class="abs" style="left:1129px;top:358.6px;width:46px;height:45px;background:linear-gradient(135deg,#ffffff 25%,#dde5ed 100%);border:1px solid #9fb0c3;box-shadow:inset 0 0 0 1px #f4f7fa"></div><div class="abs" style="left:1119px;top:405.5px;width:66px;text-align:center;font-size:9.500px;color:#111;white-space:nowrap;letter-spacing:-0.250px">一节电池</div><svg class="abs" style="left:1129.2px;top:358.7px" width="46" height="45" viewBox="0 0 46 45"><path d="M4.1 28 L14.5 21 L41.1 23 L29.7 31 Z" fill="#f6f6f6" stroke="#333" stroke-width="0.700"/><path d="M4.1 28 L29.7 31 L41.1 23 V24.8 L29.7 32.8 L4.1 29.8 Z" fill="#1e1e1e"/><path d="M29.700 25.500 L35.900 20.500 V13.400 L29.700 17.500 Z" fill="#f2f2f2" stroke="#333" stroke-width="0.600"/><path d="M11 25 L13 17 L18 13.500" fill="none" stroke="#333" stroke-width="0.600"/><defs><linearGradient id="cy" x1="0" y1="0" x2="0" y2="1"><stop offset="0" stop-color="#9a9a9a"/><stop offset="0.350" stop-color="#ffffff"/><stop offset="0.800" stop-color="#e0e0e0"/><stop offset="1" stop-color="#555"/></linearGradient></defs><path d="M13.500 15.500 Q12 20 12.500 24.500 L28.500 26 Q30.500 21.500 29.500 17 Z" fill="url(#cy)" stroke="#333" stroke-width="0.700"/><path d="M27 16.800 Q28.300 21.500 26.500 25.800" fill="none" stroke="#333" stroke-width="0.900"/><circle cx="10.800" cy="25.300" r="1" fill="#333"/><circle cx="34.500" cy="25" r="1" fill="#333"/></svg><div class="abs" style="left:1075px;top:423px;width:46px;height:45px;background:linear-gradient(135deg,#ffffff 25%,#dde5ed 100%);border:1px solid #9fb0c3;box-shadow:inset 0 0 0 1px #f4f7fa"></div><div class="abs" style="left:1065px;top:469.9px;width:66px;text-align:center;font-size:9.500px;color:#111;white-space:nowrap;letter-spacing:-0.250px">电流表盘</div><svg class="abs" style="left:1075.2px;top:423.1px" width="46" height="45" viewBox="0 0 46 45"><path d="M4 19.100 Q22.800 5 41.900 19.100 L36.200 28.400 Q22.800 19.500 9.800 28.400 Z" fill="#fbfbfb" stroke="#6e6e6e" stroke-width="1.500" stroke-linejoin="round"/><path d="M11.500 20.200 Q22.800 13.800 34.500 20.200" fill="none" stroke="#2a2a2a" stroke-width="1.600"/><path d="M13.500 18 l0.500 1.500M18 16.200 l0.300 1.500M22.800 15.500v1.500M27.500 16.200l-0.300 1.500M32 18l-0.500 1.500" stroke="#5a6ab0" stroke-width="0.500"/><path d="M16.600 20.500 L17.600 25" stroke="#e03020" stroke-width="0.900"/><path d="M14 30.500v2M22.500 31v2M31 30.500v2M13.300 30.500h1.400M21.800 31h1.400M30.300 30.500h1.400" stroke="#555" stroke-width="0.700"/><path d="M20 22.500l1 1.500M25 22.500l-1 1.500" stroke="#88a" stroke-width="0.400"/></svg><div class="abs" style="left:1129px;top:423px;width:46px;height:45px;background:linear-gradient(135deg,#ffffff 25%,#dde5ed 100%);border:1px solid #9fb0c3;box-shadow:inset 0 0 0 1px #f4f7fa"></div><div class="abs" style="left:1119px;top:469.9px;width:66px;text-align:center;font-size:9.500px;color:#111;white-space:nowrap;letter-spacing:-0.250px">两节电池</div><svg class="abs" style="left:1129.2px;top:423.1px" width="46" height="45" viewBox="0 0 46 45"><path d="M4.1 27.5 L13.2 21.5 L42.1 24 L33.8 30.5 Z" fill="#f6f6f6" stroke="#333" stroke-width="0.700"/><path d="M4.1 27.5 L33.8 30.5 L42.1 24 V25.6 L33.8 32.1 L4.1 29.1 Z" fill="#1e1e1e"/><path d="M36 25.500 L39.300 23 V15 L36 17.500 Z" fill="#f2f2f2" stroke="#333" stroke-width="0.600"/><path d="M10 24 L12 17 L15 14.500" fill="none" stroke="#333" stroke-width="0.600"/><path d="M12 17 Q10.500 20.500 11 24 L22.500 25.200 Q24 21.500 23 17.800 Z" fill="url(#cy)" stroke="#333" stroke-width="0.700"/><path d="M24.500 18 Q23 21.500 23.500 25.200 L35 26.300 Q36.500 22.500 35.500 19 Z" fill="url(#cy)" stroke="#333" stroke-width="0.700"/><path d="M21.800 17.800 Q22.600 21.500 21.300 25 M34.300 19 Q35.100 22.500 33.800 26" fill="none" stroke="#333" stroke-width="0.800"/></svg><div class="abs" style="left:1112px;top:582.500px;width:56px;height:18px;background:#eef2f6;border:1px solid #c6d0db;border-top:none;border-radius:0 0 2px 2px"></div><svg class="abs" style="left:1054px;top:585px" width="13" height="12" viewBox="0 0 13 12"><rect x="1" y="1.500" width="10" height="8.500" rx="1" fill="#fff" stroke="#3a62b0" stroke-width="1"/><rect x="1" y="1.500" width="10" height="2.500" fill="#e8792a"/><rect x="2.500" y="5.500" width="7" height="2.500" fill="#9ab6e4"/><circle cx="10" cy="9.500" r="2.200" fill="#2f9a3a"/><path d="M8.800 9.500h2.400M10 8.300v2.400" stroke="#fff" stroke-width="0.700"/></svg><div class="abs" style="left:1069.500px;top:586.500px;font-size:9.500px;color:#8a9097;white-space:nowrap;letter-spacing:-0.300px">资源视图</div><svg class="abs" style="left:1114px;top:585px" width="12" height="12" viewBox="0 0 12 12"><path d="M2 1h6l2.500 2.500V11H2z" fill="#fff" stroke="#555" stroke-width="0.800"/><rect x="1" y="5" width="8.500" height="5.500" fill="#3d6cc4" stroke="#234" stroke-width="0.500"/><path d="M1.500 10l2.500-2.500 2 1.500 1.500-1 2 2z" fill="#5a9a3a"/></svg><div class="abs" style="left:1128px;top:586.500px;font-size:9.500px;color:#111;white-space:nowrap;letter-spacing:-0.300px">符号视图</div>
<div class="tb" style="left:0px;top:603.5px;width:608px;height:19px;background:linear-gradient(#e6edf4 0%,#dbe4ed 45%,#b4c3d2 92%,#93a6ba 100%)"><div class="gz"></div><div class="grip" style="top:3px"></div><svg class="ic" style="left:8px;top:1.5px" width="16" height="16" viewBox="0 0 16 16" ><rect x="2.500" y="2.500" width="7" height="7" fill="#b5bdc6" stroke="#9aa3ad" stroke-width="0.700" stroke-dasharray="1 0.800"/><rect x="6.500" y="6.500" width="7" height="7" fill="#8c959f"/></svg><svg class="ic" style="left:27px;top:1.5px" width="16" height="16" viewBox="0 0 16 16" ><rect x="2.500" y="2.500" width="7" height="7" fill="#c5ccd4" stroke="#9aa3ad" stroke-width="0.700" stroke-dasharray="1 0.800"/><rect x="7" y="7" width="6.500" height="6.500" fill="#a9b1bb"/><path d="M10 4h3" stroke="#9aa3ad" stroke-width="0.800"/></svg><svg class="ic" style="left:44px;top:1.5px" width="16" height="16" viewBox="0 0 16 16" ><path d="M5 7V5.200C5 2.600 11 2.600 11 5.200V7" fill="none" stroke="#333" stroke-width="1.100"/><rect x="3.500" y="7" width="9" height="6.500" rx="0.800" fill="#f4f4f4" stroke="#333" stroke-width="1"/><path d="M8 9v2.500M7 10.200h2" stroke="#333" stroke-width="0.800"/></svg><div class="sep" style="left:64px;top:3px"></div><svg class="ic" style="left:68px;top:1.5px" width="16" height="16" viewBox="0 0 16 16" ><rect x="2.500" y="2.500" width="7.500" height="7.500" fill="#c5ccd4" stroke="#9aa3ad" stroke-width="0.800"/><rect x="6" y="6" width="7.500" height="7.500" fill="#8c959f" stroke="#7a848f" stroke-width="0.800"/></svg><svg class="ic" style="left:86.5px;top:1.5px" width="16" height="16" viewBox="0 0 16 16" ><rect x="6" y="6" width="7.500" height="7.500" fill="#c5ccd4" stroke="#9aa3ad" stroke-width="0.800"/><rect x="2.500" y="2.500" width="7.500" height="7.500" fill="#a9b1bb" stroke="#7a848f" stroke-width="0.800"/></svg><div class="sep" style="left:106px;top:3px"></div><svg class="ic" style="left:110px;top:1.5px" width="16" height="16" viewBox="0 0 16 16" ><rect x="3.500" y="3.500" width="9" height="9" fill="none" stroke="#9aa3ad" stroke-width="0.800"/><rect x="6" y="6" width="5" height="5" fill="none" stroke="#9aa3ad" stroke-width="0.800"/><rect x="2.5" y="2.5" width="2" height="2" fill="#8c959f"/><rect x="11.5" y="2.5" width="2" height="2" fill="#8c959f"/><rect x="2.5" y="11.5" width="2" height="2" fill="#8c959f"/><rect x="11.5" y="11.5" width="2" height="2" fill="#8c959f"/></svg><svg class="ic" style="left:128.5px;top:1.5px" width="16" height="16" viewBox="0 0 16 16" ><rect x="2.500" y="2.500" width="7" height="7" fill="none" stroke="#9aa3ad" stroke-width="0.800"/><rect x="6.500" y="6.500" width="7" height="7" fill="none" stroke="#9aa3ad" stroke-width="0.800"/><rect x="1.5" y="1.5" width="2" height="2" fill="#8c959f"/><rect x="8.5" y="1.5" width="2" height="2" fill="#8c959f"/><rect x="1.5" y="8.5" width="2" height="2" fill="#8c959f"/><rect x="12.5" y="12.5" width="2" height="2" fill="#8c959f"/></svg><div class="sep" style="left:149px;top:3px"></div><svg class="ic" style="left:154.5px;top:1.5px" width="16" height="16" viewBox="0 0 16 16" ><path d="M3 6c0-3 3-3 3 0s-2 5-2 6.500" fill="none" stroke="#333" stroke-width="0.900"/><path d="M6 11l5.500-6 1.800 1.500-5.500 6-2.200.600z" fill="#ecd84a" stroke="#6a5a10" stroke-width="0.600"/><path d="M12 14h2" stroke="#555" stroke-width="0.700"/></svg><svg class="ic" style="left:177px;top:1.5px" width="16" height="16" viewBox="0 0 16 16" ><circle cx="7" cy="8.500" r="4" fill="none" stroke="#333" stroke-width="0.900"/><path d="M8 9.500l4.500 4.500" stroke="#333" stroke-width="1.200"/><path d="M10 3l1 1.500M12.500 2.500l-.5 2M13.500 5.500l-1.500.300" stroke="#d07a20" stroke-width="0.800"/><path d="M13 14.500h1.500" stroke="#555" stroke-width="0.700"/></svg><svg class="ic" style="left:200px;top:1.5px" width="16" height="16" viewBox="0 0 16 16" ><path d="M4 1.500v12M2.500 3.500L4 1.500l1.500 2M4 12h9.500M12 10.500l1.500 1.500-1.500 1.500" stroke="#222" stroke-width="0.800" fill="none"/><rect x="6" y="3.500" width="6.500" height="6.500" fill="#dff" stroke="#2a8a9a" stroke-width="0.600"/><path d="M6 5.700h6.500M6 7.800h6.500M8.200 3.500v6.500M10.300 3.500v6.500" stroke="#2a8a9a" stroke-width="0.500"/><path d="M13 14.500h1.500" stroke="#555" stroke-width="0.700"/></svg><svg class="ic" style="left:222.5px;top:1.5px" width="16" height="16" viewBox="0 0 16 16" ><path d="M4.500 9.500L8 2.500l3.500 7M5.800 7h4.400" fill="none" stroke="#444" stroke-width="0.900"/><path d="M2.500 10v3.500M13.500 10v3.500M2.500 11.800h11M2.500 11.800l1.500-1M2.500 11.800l1.500 1M13.500 11.800l-1.500-1M13.500 11.800l-1.500 1" stroke="#444" stroke-width="0.700" fill="none"/><path d="M13 14.800h1.500" stroke="#555" stroke-width="0.700"/></svg><svg class="ic" style="left:245px;top:1.5px" width="16" height="16" viewBox="0 0 16 16" ><path d="M3 4.500h4.500v6.500H12" fill="none" stroke="#333" stroke-width="1"/><rect x="2" y="3.500" width="2" height="2" fill="#333"/><rect x="11" y="10" width="2" height="2" fill="#333"/><path d="M12.500 14h2" stroke="#555" stroke-width="0.700"/></svg><svg class="ic" style="left:267px;top:1.5px" width="16" height="16" viewBox="0 0 16 16" ><path d="M2 4h12M2 4l1.500-1.200M2 4l1.500 1.200M14 4l-1.500-1.200M14 4l-1.500 1.200M8 1.500v3" stroke="#333" stroke-width="0.700" fill="none"/><path d="M8 2.200l2 1.800-2 1.800-2-1.800z" fill="#e8d83a" stroke="#6a5a10" stroke-width="0.500"/><path d="M8.500 6v8l2-2 1.500 3 1.200-.600-1.500-2.800h2.800z" fill="#fff" stroke="#222" stroke-width="0.700"/></svg><div class="ddk" style="left:285px;top:8px"></div><div class="sep" style="left:296px;top:3px"></div><svg class="ic" style="left:299px;top:1.5px" width="16" height="16" viewBox="0 0 16 16" ><rect x="2" y="3" width="12" height="10" fill="#fff" stroke="#2a3a9a" stroke-width="1"/><rect x="2.500" y="3.500" width="11" height="3.500" fill="#2a3ac0"/><rect x="3.500" y="8.500" width="9" height="3" fill="#f0d84a"/></svg><svg class="ic" style="left:320px;top:1.5px" width="16" height="16" viewBox="0 0 16 16" ><path d="M11.200 2.200l1.800 1.400-5.400 6.800-2.400 1z" fill="#8c959f" stroke="#6f7883" stroke-width="0.600"/><rect x="2" y="12" width="11" height="2" fill="#f4f6f8" stroke="#9aa3ad" stroke-width="0.500"/></svg><div class="dd" style="left:338px;top:8px"></div><svg class="ic" style="left:347px;top:1.5px" width="16" height="16" viewBox="0 0 16 16" ><path d="M6 4l5 4-3 3.500-5-1.500z" fill="#aeb6bf" stroke="#7a848f" stroke-width="0.700"/><path d="M7.500 2.500l1 3" stroke="#7a848f" stroke-width="0.800"/><rect x="2" y="12" width="11" height="2" fill="#f4f6f8" stroke="#9aa3ad" stroke-width="0.500"/></svg><div class="dd" style="left:366px;top:8px"></div><svg class="ic" style="left:377px;top:1.5px" width="16" height="16" viewBox="0 0 16 16" ><path d="M2.500 4.500h11M2.500 8h11M2.500 11.500h11" stroke="#9aa3ad" stroke-width="1.500"/></svg><svg class="ic" style="left:399px;top:1.5px" width="16" height="16" viewBox="0 0 16 16" ><path d="M2.500 4.500h11" stroke="#9aa3ad" stroke-width="1.200"/><path d="M2.500 8h11" stroke="#9aa3ad" stroke-width="1.200" stroke-dasharray="2.500 1.200"/><path d="M2.500 11.500h11" stroke="#9aa3ad" stroke-width="1.200" stroke-dasharray="1.200 1"/></svg><svg class="ic" style="left:419px;top:1.5px" width="16" height="16" viewBox="0 0 16 16" ><path d="M2.500 5h10M2.500 11h10M10 3l2.800 2-2.800 2M5.300 9l-2.800 2 2.800 2" stroke="#9aa3ad" stroke-width="1" fill="none"/><path d="M2.500 8h11" stroke="#9aa3ad" stroke-width="0.800"/></svg><div class="sep" style="left:440px;top:3px"></div><svg class="ic" style="left:443.5px;top:1.5px" width="16" height="16" viewBox="0 0 16 16" ><rect x="4.500" y="2.500" width="7" height="4.500" fill="none" stroke="#9aa3ad" stroke-width="0.800"/><path d="M8 7v6M6.500 11.500L8 13l1.500-1.500M2.500 13.500h11" stroke="#9aa3ad" stroke-width="0.800" fill="none"/><rect x="3.500" y="1.500" width="2" height="2" fill="#9aa3ad"/><rect x="10.500" y="1.500" width="2" height="2" fill="#9aa3ad"/></svg><svg class="ic" style="left:461.5px;top:1.5px" width="16" height="16" viewBox="0 0 16 16" ><rect x="4.500" y="2.500" width="7" height="4.500" fill="none" stroke="#9aa3ad" stroke-width="0.800" stroke-dasharray="1.200 0.800"/><path d="M8 3v10M6.500 11.500L8 13l1.500-1.500M2.500 13.500h11M5 4.800h6" stroke="#9aa3ad" stroke-width="0.800" fill="none"/></svg><div class="sep" style="left:482px;top:3px"></div><svg class="ic" style="left:485.5px;top:1.5px" width="16" height="16" viewBox="0 0 16 16" ><rect x="3.500" y="3.500" width="9" height="9" fill="none" stroke="#8a939c" stroke-width="0.800" stroke-dasharray="1.500 1"/><rect x="2.5" y="2.5" width="2" height="2" fill="#6f7883"/><rect x="11.5" y="2.5" width="2" height="2" fill="#6f7883"/><rect x="2.5" y="11.5" width="2" height="2" fill="#6f7883"/><rect x="11.5" y="11.5" width="2" height="2" fill="#6f7883"/></svg><svg class="ic" style="left:504px;top:1.5px" width="16" height="16" viewBox="0 0 16 16" ><path d="M2 9h4.500M9.500 7H14" stroke="#555" stroke-width="0.900"/><path d="M6.500 11.500l3-7" stroke="#555" stroke-width="0.900"/><path d="M10.500 9.500h3" stroke="#888" stroke-width="0.700" stroke-dasharray="1 0.700"/></svg><svg class="ic" style="left:521px;top:1.5px" width="16" height="16" viewBox="0 0 16 16" ><rect x="3.500" y="4.500" width="9" height="7" fill="#bfe9e4" stroke="#222" stroke-width="0.900"/><path d="M2 4.500h12M2 11.500h12M3.500 3v10M12.500 3v10" stroke="#222" stroke-width="0.900"/><path d="M4 5l8 6M4 8l4 3M8 5l4 3" stroke="#3a9a8a" stroke-width="0.400"/></svg><svg class="ic" style="left:539.5px;top:1.5px" width="16" height="16" viewBox="0 0 16 16" ><path d="M6 2.500h4v3.500h3.500v4H10v3.500H6V10H2.500V6H6z" fill="#e9edf1" stroke="#9aa3ad" stroke-width="0.800"/><path d="M6 6h4v4H6z" fill="none" stroke="#9aa3ad" stroke-width="0.600"/></svg><svg class="ic" style="left:558.5px;top:1.5px" width="16" height="16" viewBox="0 0 16 16" ><path d="M9 2l1.200 1-1.500 3.500 2 1.300-2.200 3L6.200 9.200z" fill="#c5ccd4" stroke="#7a848f" stroke-width="0.700"/><path d="M11.500 2.500l1 1-2 3" stroke="#7a848f" stroke-width="0.700" fill="none"/><path d="M7 10.500l-2.500 3M3 14h6" stroke="#7a848f" stroke-width="0.800"/></svg><svg class="ic" style="left:578px;top:1.5px" width="16" height="16" viewBox="0 0 16 16" ><path d="M3 10l6-6.500 4 1.600-6 6.500z" fill="#dfe4ea" stroke="#9aa3ad" stroke-width="0.800"/><path d="M5 10.500l5.500-6M7 11l5.500-6" stroke="#9aa3ad" stroke-width="0.600"/><path d="M3 10v1.500l4 1.700v-1.600" fill="#c6cdd5" stroke="#9aa3ad" stroke-width="0.700"/><path d="M11 13.500h3" stroke="#9aa3ad" stroke-width="0.600"/></svg><div class="abs" style="left:599.0px;top:12px;width:0;height:0;border-left:2.500px solid transparent;border-right:2.500px solid transparent;border-top:3px solid #000"></div></div>
<div class="tb" style="left:609px;top:603.5px;width:297px;height:19px;background:linear-gradient(#e6edf4 0%,#dbe4ed 45%,#b4c3d2 92%,#93a6ba 100%)"><div class="gz"></div><div class="grip" style="top:3px"></div><svg class="ic" style="left:10px;top:1.5px" width="16" height="16" viewBox="0 0 16 16" ><text x="8" y="11" text-anchor="middle" font-family="Liberation Sans,DejaVu Sans,sans-serif" font-size="8.500" fill="#aab2bc">(⁝⁝)</text><path d="M11.500 14h2" stroke="#b4bcc6" stroke-width="0.600"/></svg><svg class="ic" style="left:39px;top:1.5px" width="16" height="16" viewBox="0 0 16 16" ><path d="M8 2v3M8 11v3M5.500 8h5" stroke="#aab2bc" stroke-width="0.800"/><rect x="6.500" y="5" width="3" height="2" fill="none" stroke="#aab2bc" stroke-width="0.600"/><rect x="6.500" y="9" width="3" height="2" fill="none" stroke="#aab2bc" stroke-width="0.600"/></svg><svg class="ic" style="left:67px;top:1.5px" width="16" height="16" viewBox="0 0 16 16" ><path d="M5 4v8M5 5.500h3M5 10.500h3" stroke="#aab2bc" stroke-width="0.900" fill="none"/><rect x="8" y="4.500" width="2.500" height="2" fill="#aab2bc"/><rect x="8" y="9.500" width="2.500" height="2" fill="#aab2bc"/></svg><svg class="ic" style="left:95px;top:1.5px" width="16" height="16" viewBox="0 0 16 16" ><text x="8" y="11" text-anchor="middle" font-family="Liberation Sans,DejaVu Sans,sans-serif" font-size="8.500" fill="#aab2bc">∑⊃</text><path d="M11.500 14h2" stroke="#b4bcc6" stroke-width="0.600"/></svg><svg class="ic" style="left:124px;top:1.5px" width="16" height="16" viewBox="0 0 16 16" ><path d="M5 3v10M11 3v10" stroke="#aab2bc" stroke-width="0.800"/><rect x="6.500" y="5" width="3" height="6" fill="none" stroke="#aab2bc" stroke-width="0.600" stroke-dasharray="1 0.700"/></svg><svg class="ic" style="left:152px;top:1.5px" width="16" height="16" viewBox="0 0 16 16" ><path d="M8 2.500v3M8 10.500v3M3.500 8h9" stroke="#aab2bc" stroke-width="0.900"/><rect x="7" y="4" width="2" height="2" fill="#aab2bc"/><rect x="7" y="10" width="2" height="2" fill="#aab2bc"/></svg><svg class="ic" style="left:180px;top:1.5px" width="16" height="16" viewBox="0 0 16 16" ><path d="M6 2.500v11M6 4h4M4.500 6h3" stroke="#aab2bc" stroke-width="0.800"/><rect x="6.500" y="7" width="3.500" height="5" fill="none" stroke="#aab2bc" stroke-width="0.600"/></svg><svg class="ic" style="left:209px;top:1.5px" width="16" height="16" viewBox="0 0 16 16" ><rect x="3.5" y="4" width="2" height="1.600" fill="#aab2bc"/><rect x="3.5" y="7" width="2" height="1.600" fill="#aab2bc"/><rect x="3.5" y="10" width="2" height="1.600" fill="#aab2bc"/><rect x="7" y="4" width="2" height="1.600" fill="#aab2bc"/><rect x="7" y="7" width="2" height="1.600" fill="#aab2bc"/><rect x="7" y="10" width="2" height="1.600" fill="#aab2bc"/><rect x="10.5" y="4" width="2" height="1.600" fill="#aab2bc"/><rect x="10.5" y="7" width="2" height="1.600" fill="#aab2bc"/><rect x="10.5" y="10" width="2" height="1.600" fill="#aab2bc"/></svg><svg class="ic" style="left:238px;top:1.5px" width="16" height="16" viewBox="0 0 16 16" ><path d="M4.500 8h3M7.500 4.500v7M7.500 4.500h2.500M7.500 11.500h2.500" stroke="#aab2bc" stroke-width="0.800" fill="none"/><rect x="2.500" y="7" width="2.200" height="2.200" fill="#aab2bc"/><rect x="10" y="3.500" width="2.200" height="2.200" fill="#aab2bc"/><rect x="10" y="10.500" width="2.200" height="2.200" fill="#aab2bc"/></svg><svg class="ic" style="left:266px;top:1.5px" width="16" height="16" viewBox="0 0 16 16" ><path d="M8 3v9M6 5l2-2 2 2" stroke="#aab2bc" stroke-width="0.800" fill="none"/><rect x="6.500" y="7" width="3" height="4" fill="none" stroke="#aab2bc" stroke-width="0.600"/><path d="M5 13.500h6" stroke="#aab2bc" stroke-width="0.700"/></svg><div class="sep" style="left:32px;top:3px"></div><div class="sep" style="left:61px;top:3px"></div><div class="sep" style="left:89px;top:3px"></div><div class="sep" style="left:118px;top:3px"></div><div class="sep" style="left:146px;top:3px"></div><div class="sep" style="left:174px;top:3px"></div><div class="sep" style="left:203px;top:3px"></div><div class="sep" style="left:231px;top:3px"></div><div class="sep" style="left:260px;top:3px"></div><div class="abs" style="left:287.5px;top:12px;width:0;height:0;border-left:2.500px solid transparent;border-right:2.500px solid transparent;border-top:3px solid #000"></div></div>
<div class="abs" style="left:0;top:623px;width:1200px;height:16px;background:linear-gradient(90deg,#bccbdc 0,#c6d3e1 35%,#d0dbe6 70%,#d5dfe9 100%)"></div><div class="abs" style="left:3px;top:624.500px;width:682px;height:14.500px;border-left:1px solid #7f8ea0;border-top:1px solid #7f8ea0;border-right:1px solid #f4f7fa"></div><div class="abs" style="left:6px;top:627px;font-size:9.500px;color:#000;white-space:nowrap;letter-spacing:-0.300px">准备</div><div class="abs" style="left:688px;top:624.500px;width:100px;height:14.500px;border-left:1px solid #7f8ea0;border-top:1px solid #7f8ea0;border-right:1px solid #f4f7fa"></div><div class="abs" style="left:691px;top:627px;font-size:9.500px;color:#000;white-space:nowrap;letter-spacing:-0.300px"><span style="font-size:10px;letter-spacing:0;position:relative;top:-0.400px;left:0.500px">1/1</span></div><div class="abs" style="left:790px;top:624.500px;width:264px;height:14.500px;border-left:1px solid #7f8ea0;border-top:1px solid #7f8ea0;border-right:1px solid #f4f7fa"></div><div class="abs" style="left:793px;top:627px;font-size:9.500px;color:#000;white-space:nowrap;letter-spacing:-0.300px"><span style="font-size:10px;letter-spacing:-0.140px;position:relative;top:-0.400px;left:0.500px">x:-19.00&nbsp;&nbsp;y:-33.00&nbsp;&nbsp;(mm)</span></div><div class="abs" style="left:1056px;top:624.500px;width:36px;height:14.500px;border-left:1px solid #7f8ea0;border-top:1px solid #7f8ea0;border-right:1px solid #f4f7fa"></div><div class="abs" style="left:1059px;top:627px;font-size:9.500px;font-weight:500;color:#000;white-space:nowrap;letter-spacing:-0.300px">数学</div><div class="abs" style="left:1099px;top:624.500px;width:20px;height:14.500px;border-left:1px solid #7f8ea0;border-top:1px solid #7f8ea0;border-right:1px solid #f4f7fa"></div><div class="abs" style="left:1102px;top:627px;font-size:9.500px;color:#98a0a8;white-space:nowrap;letter-spacing:-0.300px">大写</div><div class="abs" style="left:1121px;top:624.500px;width:20px;height:14.500px;border-left:1px solid #7f8ea0;border-top:1px solid #7f8ea0;border-right:1px solid #f4f7fa"></div><div class="abs" style="left:1124px;top:627px;font-size:9.500px;font-weight:500;color:#000;white-space:nowrap;letter-spacing:-0.300px">数字</div><div class="abs" style="left:1143px;top:624.500px;width:20px;height:14.500px;border-left:1px solid #7f8ea0;border-top:1px solid #7f8ea0;border-right:1px solid #f4f7fa"></div><div class="abs" style="left:1146px;top:627px;font-size:9.500px;color:#98a0a8;white-space:nowrap;letter-spacing:-0.300px">滚动</div><div class="abs" style="left:1165px;top:624.500px;width:20px;height:14.500px;border-left:1px solid #7f8ea0;border-top:1px solid #7f8ea0;border-right:1px solid #f4f7fa"></div><div class="abs" style="left:1168px;top:627px;font-size:9.500px;color:#98a0a8;white-space:nowrap;letter-spacing:-0.300px">改写</div><svg class="abs" style="left:1189px;top:628px" width="11" height="11" viewBox="0 0 11 11"><path d="M10 2L2 10M10 5.500L5.500 10M10 9l-1 1" stroke="#9aa8b8" stroke-width="1"/></svg>
<div class="abs" style="left:236.300px;top:189.800px;width:316.200px;height:257px;background:#f0f0f0;border:1px solid #c2c2c2;border-radius:5px;box-shadow:0 16px 34px 3px rgba(0,0,0,0.32),0 0 8px rgba(0,0,0,0.14);overflow:hidden"><div class="abs" style="left:0;top:0;width:100%;height:18.400px;background:#eff4fa"></div></div><div class="abs" style="left:240.500px;top:195.500px;font-size:9.200px;white-space:nowrap;letter-spacing:-0.040px;color:#111">对象捕捉</div><svg class="abs" style="left:536px;top:195px" width="10" height="10" viewBox="0 0 10 10"><path d="M1.500 1.500l7 7M8.500 1.500l-7 7" stroke="#222" stroke-width="0.900"/></svg><div class="abs" style="left:245.500px;top:218px;width:299px;height:40px;border:1px solid #dcdcdc;border-radius:3px"></div><div class="abs" style="left:253.500px;top:213.8px;padding:0 2.500px;background:#f0f0f0;font-size:9.200px;color:#2e7bd6;white-space:nowrap">总体</div><div class="abs" style="left:277px;top:226.8px;width:9.400px;height:9.400px;background:#0a64c0;border-radius:2px"></div><svg class="abs" style="left:277px;top:226.8px" width="9.400" height="9.400" viewBox="0 0 9.400 9.400"><path d="M2.300 4.800l1.700 1.700 3.200-3.500" fill="none" stroke="#fff" stroke-width="1"/></svg><div class="abs" style="left:291px;top:227.3px;font-size:9.200px;white-space:nowrap;letter-spacing:-0.040px;color:#111;outline:1px dotted #333;outline-offset:0.500px">启动对象捕捉</div><div class="abs" style="left:366px;top:226.8px;width:9.400px;height:9.400px;background:#0a64c0;border-radius:2px"></div><svg class="abs" style="left:366px;top:226.8px" width="9.400" height="9.400" viewBox="0 0 9.400 9.400"><path d="M2.300 4.800l1.700 1.700 3.200-3.500" fill="none" stroke="#fff" stroke-width="1"/></svg><div class="abs" style="left:380px;top:227.3px;font-size:9.200px;white-space:nowrap;letter-spacing:-0.040px;color:#111">启动交点捕捉</div><div class="abs" style="left:455.5px;top:226.8px;width:9.400px;height:9.400px;background:#0a64c0;border-radius:2px"></div><svg class="abs" style="left:455.5px;top:226.8px" width="9.400" height="9.400" viewBox="0 0 9.400 9.400"><path d="M2.300 4.800l1.700 1.700 3.200-3.500" fill="none" stroke="#fff" stroke-width="1"/></svg><div class="abs" style="left:469.5px;top:227.3px;font-size:9.200px;white-space:nowrap;letter-spacing:-0.040px;color:#111">显示临近点</div><div class="abs" style="left:277px;top:244px;font-size:9.200px;white-space:nowrap;letter-spacing:-0.040px;color:#111">注：在操作过程中可按住Shift键临时关闭一切捕捉。</div><div class="abs" style="left:245.500px;top:265.5px;width:299px;height:58px;border:1px solid #dcdcdc;border-radius:3px"></div><div class="abs" style="left:253.500px;top:261.3px;padding:0 2.500px;background:#f0f0f0;font-size:9.200px;color:#2e7bd6;white-space:nowrap">对象</div><div class="abs" style="left:277px;top:276.3px;width:9.400px;height:9.400px;background:#0a64c0;border-radius:2px"></div><svg class="abs" style="left:277px;top:276.3px" width="9.400" height="9.400" viewBox="0 0 9.400 9.400"><path d="M2.300 4.800l1.700 1.700 3.200-3.500" fill="none" stroke="#fff" stroke-width="1"/></svg><div class="abs" style="left:291px;top:276.8px;font-size:9.200px;white-space:nowrap;letter-spacing:-0.040px;color:#111">端点</div><div class="abs" style="left:366px;top:276.3px;width:9.400px;height:9.400px;background:#0a64c0;border-radius:2px"></div><svg class="abs" style="left:366px;top:276.3px" width="9.400" height="9.400" viewBox="0 0 9.400 9.400"><path d="M2.300 4.800l1.700 1.700 3.200-3.500" fill="none" stroke="#fff" stroke-width="1"/></svg><div class="abs" style="left:380px;top:276.8px;font-size:9.200px;white-space:nowrap;letter-spacing:-0.040px;color:#111">圆心(含椭圆)</div><div class="abs" style="left:455.5px;top:276.3px;width:9.400px;height:9.400px;background:#0a64c0;border-radius:2px"></div><svg class="abs" style="left:455.5px;top:276.3px" width="9.400" height="9.400" viewBox="0 0 9.400 9.400"><path d="M2.300 4.800l1.700 1.700 3.200-3.500" fill="none" stroke="#fff" stroke-width="1"/></svg><div class="abs" style="left:469.5px;top:276.8px;font-size:9.200px;white-space:nowrap;letter-spacing:-0.040px;color:#111">象限点</div><div class="abs" style="left:277px;top:292px;width:9.400px;height:9.400px;background:#0a64c0;border-radius:2px"></div><svg class="abs" style="left:277px;top:292px" width="9.400" height="9.400" viewBox="0 0 9.400 9.400"><path d="M2.300 4.800l1.700 1.700 3.200-3.500" fill="none" stroke="#fff" stroke-width="1"/></svg><div class="abs" style="left:291px;top:292.5px;font-size:9.200px;white-space:nowrap;letter-spacing:-0.040px;color:#111">线段中心点</div><div class="abs" style="left:366px;top:292px;width:9.400px;height:9.400px;background:#0a64c0;border-radius:2px"></div><svg class="abs" style="left:366px;top:292px" width="9.400" height="9.400" viewBox="0 0 9.400 9.400"><path d="M2.300 4.800l1.700 1.700 3.200-3.500" fill="none" stroke="#fff" stroke-width="1"/></svg><div class="abs" style="left:380px;top:292.5px;font-size:9.200px;white-space:nowrap;letter-spacing:-0.040px;color:#111">弧线中心点</div><div class="abs" style="left:455.5px;top:292px;width:9.400px;height:9.400px;background:#0a64c0;border-radius:2px"></div><svg class="abs" style="left:455.5px;top:292px" width="9.400" height="9.400" viewBox="0 0 9.400 9.400"><path d="M2.300 4.800l1.700 1.700 3.200-3.500" fill="none" stroke="#fff" stroke-width="1"/></svg><div class="abs" style="left:469.5px;top:292.5px;font-size:9.200px;white-space:nowrap;letter-spacing:-0.040px;color:#111">线上点</div><div class="abs" style="left:277px;top:307.8px;width:9.400px;height:9.400px;background:#0a64c0;border-radius:2px"></div><svg class="abs" style="left:277px;top:307.8px" width="9.400" height="9.400" viewBox="0 0 9.400 9.400"><path d="M2.300 4.800l1.700 1.700 3.200-3.500" fill="none" stroke="#fff" stroke-width="1"/></svg><div class="abs" style="left:291px;top:308.3px;font-size:9.200px;white-space:nowrap;letter-spacing:-0.040px;color:#111">栅格</div><div class="abs" style="left:245.500px;top:335px;width:299px;height:77.5px;border:1px solid #dcdcdc;border-radius:3px"></div><div class="abs" style="left:253.500px;top:330.8px;padding:0 2.500px;background:#f0f0f0;font-size:9.200px;color:#2e7bd6;white-space:nowrap">交点</div><div class="abs" style="left:277px;top:345.3px;width:9.400px;height:9.400px;background:#0a64c0;border-radius:2px"></div><svg class="abs" style="left:277px;top:345.3px" width="9.400" height="9.400" viewBox="0 0 9.400 9.400"><path d="M2.300 4.800l1.700 1.700 3.200-3.500" fill="none" stroke="#fff" stroke-width="1"/></svg><div class="abs" style="left:291px;top:345.8px;font-size:9.200px;white-space:nowrap;letter-spacing:-0.040px;color:#111">直线与直线</div><div class="abs" style="left:366px;top:345.3px;width:9.400px;height:9.400px;background:#0a64c0;border-radius:2px"></div><svg class="abs" style="left:366px;top:345.3px" width="9.400" height="9.400" viewBox="0 0 9.400 9.400"><path d="M2.300 4.800l1.700 1.700 3.200-3.500" fill="none" stroke="#fff" stroke-width="1"/></svg><div class="abs" style="left:380px;top:345.8px;font-size:9.200px;white-space:nowrap;letter-spacing:-0.040px;color:#111">弧线与弧线</div><div class="abs" style="left:455.5px;top:345.3px;width:9.400px;height:9.400px;background:#0a64c0;border-radius:2px"></div><svg class="abs" style="left:455.5px;top:345.3px" width="9.400" height="9.400" viewBox="0 0 9.400 9.400"><path d="M2.300 4.800l1.700 1.700 3.200-3.500" fill="none" stroke="#fff" stroke-width="1"/></svg><div class="abs" style="left:469.5px;top:345.8px;font-size:9.200px;white-space:nowrap;letter-spacing:-0.040px;color:#111">曲线与曲线</div><div class="abs" style="left:277px;top:360.8px;width:9.400px;height:9.400px;background:#0a64c0;border-radius:2px"></div><svg class="abs" style="left:277px;top:360.8px" width="9.400" height="9.400" viewBox="0 0 9.400 9.400"><path d="M2.300 4.800l1.700 1.700 3.200-3.500" fill="none" stroke="#fff" stroke-width="1"/></svg><div class="abs" style="left:291px;top:361.3px;font-size:9.200px;white-space:nowrap;letter-spacing:-0.040px;color:#111">直线与弧线</div><div class="abs" style="left:366px;top:360.8px;width:9.400px;height:9.400px;background:#0a64c0;border-radius:2px"></div><svg class="abs" style="left:366px;top:360.8px" width="9.400" height="9.400" viewBox="0 0 9.400 9.400"><path d="M2.300 4.800l1.700 1.700 3.200-3.500" fill="none" stroke="#fff" stroke-width="1"/></svg><div class="abs" style="left:380px;top:361.3px;font-size:9.200px;white-space:nowrap;letter-spacing:-0.040px;color:#111">弧线与曲线</div><div class="abs" style="left:455.5px;top:360.8px;width:9.400px;height:9.400px;background:#0a64c0;border-radius:2px"></div><svg class="abs" style="left:455.5px;top:360.8px" width="9.400" height="9.400" viewBox="0 0 9.400 9.400"><path d="M2.300 4.800l1.700 1.700 3.200-3.500" fill="none" stroke="#fff" stroke-width="1"/></svg><div class="abs" style="left:469.5px;top:361.3px;font-size:9.200px;white-space:nowrap;letter-spacing:-0.040px;color:#111">曲线自交点</div><div class="abs" style="left:277px;top:375.8px;width:9.400px;height:9.400px;background:#0a64c0;border-radius:2px"></div><svg class="abs" style="left:277px;top:375.8px" width="9.400" height="9.400" viewBox="0 0 9.400 9.400"><path d="M2.300 4.800l1.700 1.700 3.200-3.500" fill="none" stroke="#fff" stroke-width="1"/></svg><div class="abs" style="left:291px;top:376.3px;font-size:9.200px;white-space:nowrap;letter-spacing:-0.040px;color:#111">直线与曲线</div><div class="abs" style="left:277px;top:396px;font-size:9.200px;white-space:nowrap;letter-spacing:-0.040px;color:#111">注：弧线包括圆、椭圆、圆弧以及椭圆弧</div><div class="abs" style="left:406.7px;top:422.300px;width:54px;height:14px;background:#fdfdfd;border:1px solid #d6d6d6;border-bottom-color:#c2c2c2;border-radius:2.500px;text-align:center;font-size:9.200px;white-space:nowrap;letter-spacing:-0.040px;color:#111;line-height:12.600px">确定(<u>O</u>)</div><div class="abs" style="left:469.7px;top:422.300px;width:54px;height:14px;background:#fdfdfd;border:1px solid #d6d6d6;border-bottom-color:#c2c2c2;border-radius:2.500px;text-align:center;font-size:9.200px;white-space:nowrap;letter-spacing:-0.040px;color:#111;line-height:12.600px">取消(<u>C</u>)</div>
</body></html>
